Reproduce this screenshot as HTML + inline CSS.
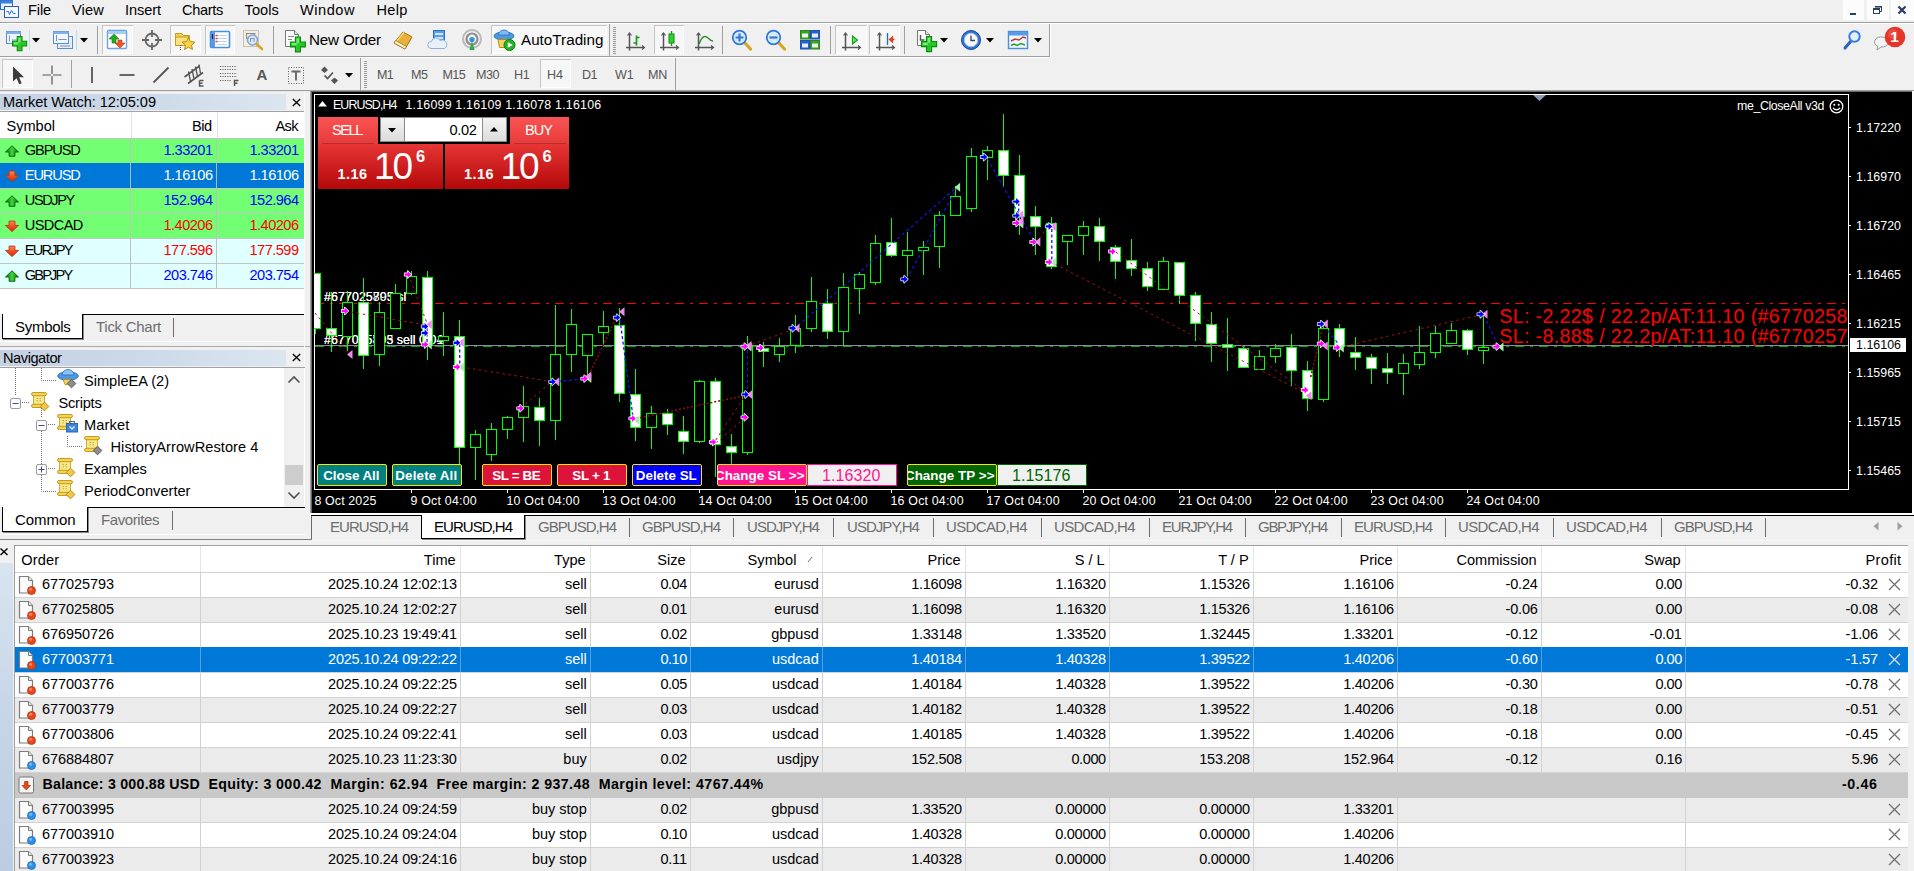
<!DOCTYPE html>
<html><head><meta charset="utf-8"><title>MT4</title>
<style>
html,body{margin:0;padding:0;}
body{width:1914px;height:871px;overflow:hidden;background:#f0f0f0;position:relative;font-family:"Liberation Sans",sans-serif;}
.t{position:absolute;white-space:pre;line-height:20px;height:20px;}
.r{position:absolute;}
svg{overflow:visible;}
</style></head><body>
<svg class="r" style="left:0px;top:0px;" width="20" height="20" viewBox="0 0 20 20">
<rect x="0.5" y="0.5" width="12" height="9" fill="#eaf2fb" stroke="#2a6fd0" stroke-width="1"/>
<rect x="0.5" y="0.5" width="12" height="3" fill="#3b82d8"/>
<rect x="4.5" y="6.5" width="14" height="11" fill="#f4f8fd" stroke="#2a5fb8" stroke-width="1"/>
<path d="M6.5 11.5 l2 0 l1 3 l2 -4 l2 3 l2 0" fill="none" stroke="#2a6fd0" stroke-width="1"/>
</svg>
<div class="t" style="left:28.00px;top:-0.50px;font-size:14.6px;color:#000;letter-spacing:-0.131px;">File</div>
<div class="t" style="left:72.00px;top:-0.50px;font-size:14.6px;color:#000;letter-spacing:0.154px;">View</div>
<div class="t" style="left:125.00px;top:-0.50px;font-size:14.6px;color:#000;letter-spacing:-0.085px;">Insert</div>
<div class="t" style="left:182.00px;top:-0.50px;font-size:14.6px;color:#000;letter-spacing:-0.333px;">Charts</div>
<div class="t" style="left:244.50px;top:-0.50px;font-size:14.6px;color:#000;letter-spacing:0.084px;">Tools</div>
<div class="t" style="left:300.00px;top:-0.50px;font-size:14.6px;color:#000;letter-spacing:0.512px;">Window</div>
<div class="t" style="left:376.50px;top:-0.50px;font-size:14.6px;color:#000;letter-spacing:0.244px;">Help</div>
<div class="r" style="left:1843px;top:0px;width:21px;height:20px;background:#fcfcfc;"></div>
<div class="r" style="left:1867px;top:0px;width:22px;height:20px;background:#fcfcfc;"></div>
<div class="r" style="left:1891px;top:0px;width:23px;height:20px;background:#fcfcfc;"></div>
<div class="r" style="left:1850px;top:13px;width:6px;height:2px;background:#2b3f63;"></div>
<svg class="r" style="left:1872px;top:4px;" width="12" height="12" viewBox="0 0 12 12"><path d="M3.5 2.5h6v5h-2" fill="none" stroke="#2b3f63" stroke-width="1"/><rect x="1.5" y="4.5" width="6" height="5" fill="#fcfcfc" stroke="#2b3f63" stroke-width="1"/><rect x="1" y="4" width="7" height="2" fill="#2b3f63"/><rect x="3" y="2" width="7" height="1.6" fill="#2b3f63"/></svg>
<svg class="r" style="left:1897px;top:5px;" width="10" height="10" viewBox="0 0 10 10"><path d="M1.5 1.5 L8.5 8.5 M8.5 1.5 L1.5 8.5" stroke="#2b3f63" stroke-width="2.2" fill="none"/></svg>
<div class="r" style="left:0px;top:22px;width:1914px;height:1px;background:#a0a0a0;"></div>
<div class="r" style="left:0px;top:23px;width:1914px;height:1px;background:#ffffff;"></div>
<div class="r" style="left:0px;top:56px;width:1049px;height:1px;background:#a0a0a0;"></div>
<div class="r" style="left:0px;top:57px;width:1050px;height:1px;background:#ffffff;"></div>
<div class="r" style="left:1049px;top:24px;width:1px;height:33px;background:#a0a0a0;"></div>
<div class="r" style="left:1050px;top:24px;width:1px;height:34px;background:#ffffff;"></div>
<svg class="r" style="left:4.0px;top:28.0px;" width="24" height="24" viewBox="0 0 24 24"><rect x="2.5" y="3.5" width="14" height="12" fill="#eef4fb" stroke="#5a8fd0"/>
<rect x="2.5" y="3.5" width="14" height="2.5" fill="#7fb0e6"/>
<path d="M5.5 7.5v6M8 12h6" stroke="#7a9cc8" fill="none"/><path transform="translate(8.5,8.5) scale(1.05)" d="M4.500 0h4.500v4.500h4.500v4.500h-4.500v4.500h-4.500v-4.500h-4.500v-4.500h4.500z" fill="#28c828" stroke="#0a8a0a" stroke-width="1"/><path transform="translate(8.5,8.5) scale(1.05)" d="M5.500 1.200h2.200v4.400h-2.200zM1.200 5.500h4.400v2h-4.400z" fill="#8ff08f" opacity=".8"/></svg>
<div class="r" style="left:29px;top:30px;width:1px;height:20px;background:#c8d8ea;"></div>
<svg class="r" style="left:32px;top:38px;" width="8" height="5" viewBox="0 0 8 5"><path d="M0 0h8l-4 4.5z" fill="#000"/></svg>
<svg class="r" style="left:51.0px;top:28.0px;" width="24" height="24" viewBox="0 0 24 24"><rect x="6.5" y="8.5" width="15" height="12" fill="#e6eef9" stroke="#5a8fd0"/>
<rect x="2.5" y="3.5" width="15" height="12" fill="#f2f7fd" stroke="#5a8fd0"/>
<rect x="2.5" y="3.5" width="15" height="2.5" fill="#7fb0e6"/>
<path d="M5.5 7v6M7.5 11.5h8M9 18h10" stroke="#6f93c4" fill="none"/></svg>
<div class="r" style="left:76px;top:30px;width:1px;height:20px;background:#c8d8ea;"></div>
<svg class="r" style="left:79.5px;top:38px;" width="8" height="5" viewBox="0 0 8 5"><path d="M0 0h8l-4 4.5z" fill="#000"/></svg>
<div class="r" style="left:97px;top:26px;width:1px;height:28px;background:#a0a0a0;"></div>
<div class="r" style="left:102px;top:25px;width:31px;height:29px;background:#f7f7f7;box-shadow:inset 1px 1px 0 #c6c6c6, inset -1px -1px 0 #ffffff;"></div>
<svg class="r" style="left:105.0px;top:28.0px;" width="24" height="24" viewBox="0 0 24 24"><rect x="2.5" y="2.5" width="19" height="18" rx="1" fill="#ffffff" stroke="#6aa5e4" stroke-width="1.4"/>
<rect x="3" y="3" width="18" height="3" fill="#a9cdf4"/>
<path d="M9 6 l5 5h-3v4h-4v-4h-3z" fill="#1fae1f" stroke="#0b7a0b" stroke-width=".6"/>
<path d="M15 20 l5 -5h-3v-3h-4v3h-3z" fill="#f0532a" stroke="#b8330f" stroke-width=".6"/></svg>
<svg class="r" style="left:139.5px;top:28.0px;" width="24" height="24" viewBox="0 0 24 24"><circle cx="12" cy="12" r="6.5" fill="none" stroke="#666" stroke-width="1.8"/>
<path d="M12 2v7M12 15v7M2 12h7M15 12h7" stroke="#666" stroke-width="1.8"/></svg>
<div class="r" style="left:170px;top:25px;width:31px;height:29px;background:#f7f7f7;box-shadow:inset 1px 1px 0 #c6c6c6, inset -1px -1px 0 #ffffff;"></div>
<svg class="r" style="left:173.0px;top:28.0px;" width="24" height="24" viewBox="0 0 24 24"><path d="M2.500 5.500h6l2 2h6v10h-14z" fill="#f3cf54" stroke="#c29a1c"/>
<path d="M2.500 9h14v8.500h-14z" fill="#fbe184" stroke="#c29a1c"/>
<path d="M7.5 17v5" stroke="#555" stroke-dasharray="1 1"/>
<path d="M15.5 9.500l1.900 4.100 4.500 .5-3.400 3 1 4.400-4-2.300-4 2.300 1-4.400-3.400-3 4.500-.5z" fill="#f8d648" stroke="#b88a12" stroke-width="1"/></svg>
<div class="r" style="left:204.5px;top:25px;width:30.5px;height:29px;background:#f7f7f7;box-shadow:inset 1px 1px 0 #c6c6c6, inset -1px -1px 0 #ffffff;"></div>
<svg class="r" style="left:207.5px;top:28.0px;" width="24" height="24" viewBox="0 0 24 24"><rect x="2.500" y="3.500" width="19" height="16" rx="1" fill="#ffffff" stroke="#4a8ee0" stroke-width="1.6"/>
<rect x="3" y="4" width="4" height="15" fill="#5b9be6"/>
<path d="M9 7.500h10M9 10.500h10M9 13.500h10M9 16.500h10" stroke="#b9d4f2"/>
<path d="M7.500 7.500h2M7.500 10.500h2M7.500 13.500h2" stroke="#e23b3b" stroke-width="1.4"/>
<path d="M4.500 6v5" stroke="#223" stroke-width="1.2"/></svg>
<svg class="r" style="left:242.0px;top:28.0px;" width="24" height="24" viewBox="0 0 24 24"><rect x="1.500" y="2.500" width="15" height="16" fill="#f3eee0" stroke="#c9c2ae"/>
<path d="M4.500 5v6M4.500 5.500h9M12.500 5v5" fill="none" stroke="#8a8a8a"/>
<circle cx="10.500" cy="12" r="5" fill="#d8e8fb" fill-opacity=".85" stroke="#7fa6d8" stroke-width="1.500"/>
<path d="M8.500 10v4M12 10v4M8.500 10.500h3.500" stroke="#7f93b0" fill="none"/>
<path d="M14.500 16l5.500 5" stroke="#d9a520" stroke-width="2.600" stroke-linecap="round"/></svg>
<div class="r" style="left:273px;top:26px;width:1px;height:28px;background:#a0a0a0;"></div>
<svg class="r" style="left:282.0px;top:28.0px;" width="24" height="24" viewBox="0 0 24 24"><path d="M3.500 2.500h9l4 4v12h-13z" fill="#fafafa" stroke="#777"/>
<path d="M12.500 2.500v4h4" fill="#e4e4e4" stroke="#777"/>
<path d="M6 8.500h6M6 11.500h4" stroke="#8a8a8a"/><path transform="translate(8.5,9) scale(1.1)" d="M4.500 0h4.500v4.500h4.500v4.500h-4.500v4.500h-4.500v-4.500h-4.500v-4.500h4.500z" fill="#28c828" stroke="#0a8a0a" stroke-width="1"/><path transform="translate(8.5,9) scale(1.1)" d="M5.500 1.200h2.200v4.400h-2.200zM1.200 5.500h4.400v2h-4.400z" fill="#8ff08f" opacity=".8"/></svg>
<div class="t" style="left:309.00px;top:29.50px;font-size:15.2px;color:#000;letter-spacing:-0.165px;">New Order</div>
<svg class="r" style="left:391.0px;top:28.0px;" width="24" height="24" viewBox="0 0 24 24"><path d="M3 15l9-11 9 5-7 12z" fill="#e9b13a" stroke="#a8730c" stroke-linejoin="round"/>
<path d="M3 15l11 6 1.500-2.500-11-6z" fill="#fbf3d6" stroke="#a8730c" stroke-width=".8"/>
<path d="M6 12.500l7-8" stroke="#f6d57a" stroke-width="1.500"/></svg>
<svg class="r" style="left:425.5px;top:28.0px;" width="24" height="24" viewBox="0 0 24 24"><rect x="7.500" y="2.500" width="11" height="13" fill="#5aa0e6" stroke="#2d6fc0"/>
<rect x="9" y="5" width="8" height="2" fill="#cfe4fb"/><rect x="9" y="9" width="8" height="2" fill="#cfe4fb"/>
<path d="M5 20.500a3.500 3.500 0 0 1 .5-7a4.500 4.500 0 0 1 8.500-1a4 4 0 0 1 4.500 8z" fill="#e7f0fb" stroke="#8fb0d8"/></svg>
<svg class="r" style="left:459.5px;top:28.0px;" width="24" height="24" viewBox="0 0 24 24"><circle cx="12" cy="11" r="9" fill="none" stroke="#b9b9b9" stroke-width="2"/>
<circle cx="12" cy="11" r="5.500" fill="none" stroke="#8e8e8e" stroke-width="2.200"/>
<circle cx="12" cy="11.500" r="2.600" fill="#2f8fe0"/>
<path d="M9.500 22l2.500-9 2.500 9z" fill="#2aa84a"/></svg>
<div class="r" style="left:490.5px;top:25px;width:116.5px;height:29px;background:#f7f7f7;box-shadow:inset 1px 1px 0 #c6c6c6, inset -1px -1px 0 #ffffff;"></div>
<svg class="r" style="left:493.0px;top:28.0px;" width="24" height="24" viewBox="0 0 24 24"><ellipse cx="11" cy="8" rx="10" ry="4" fill="#4d9ae0" stroke="#2d6fc0"/>
<path d="M5.500 7a5.500 5 0 0 1 11 0z" fill="#7ebcf2" stroke="#2d6fc0" stroke-width=".8"/>
<path d="M5 11.500h12l-1.500 8h-9z" fill="#f2d35c" stroke="#b88a12"/>
<circle cx="16.500" cy="17" r="5.500" fill="#27b327" stroke="#0f7f0f"/>
<path d="M14.800 14.200v5.600l4.800-2.800z" fill="#fff"/></svg>
<div class="t" style="left:521.00px;top:29.50px;font-size:15.2px;color:#000;letter-spacing:0.024px;">AutoTrading</div>
<div class="r" style="left:609px;top:24px;width:1px;height:32px;background:#a0a0a0;"></div>
<svg class="r" style="left:613px;top:27px;" width="3" height="27" viewBox="0 0 3 27"><rect x="0" y="0" width="3" height="1" fill="#9c9c9c"/><rect x="0" y="2" width="3" height="1" fill="#9c9c9c"/><rect x="0" y="4" width="3" height="1" fill="#9c9c9c"/><rect x="0" y="6" width="3" height="1" fill="#9c9c9c"/><rect x="0" y="8" width="3" height="1" fill="#9c9c9c"/><rect x="0" y="10" width="3" height="1" fill="#9c9c9c"/><rect x="0" y="12" width="3" height="1" fill="#9c9c9c"/><rect x="0" y="14" width="3" height="1" fill="#9c9c9c"/><rect x="0" y="16" width="3" height="1" fill="#9c9c9c"/><rect x="0" y="18" width="3" height="1" fill="#9c9c9c"/><rect x="0" y="20" width="3" height="1" fill="#9c9c9c"/><rect x="0" y="22" width="3" height="1" fill="#9c9c9c"/><rect x="0" y="24" width="3" height="1" fill="#9c9c9c"/><rect x="0" y="26" width="3" height="1" fill="#9c9c9c"/></svg>
<svg class="r" style="left:623.0px;top:28.0px;" width="24" height="24" viewBox="0 0 24 24"><path d="M6.500 5.500v17M3 19.500h18" stroke="#555" stroke-width="1.500" fill="none"/><path d="M4.500 7.500l2-2.500 2 2.500M19 17.500l2.500 2-2.500 2" fill="none" stroke="#555" stroke-width="1.200"/><path d="M13.500 7.500v10M13.500 9.500h3M10.500 15h3" stroke="#1a9a1a" stroke-width="1.700" fill="none"/></svg>
<div class="r" style="left:653.5px;top:25px;width:30.5px;height:29px;background:#f7f7f7;box-shadow:inset 1px 1px 0 #c6c6c6, inset -1px -1px 0 #ffffff;"></div>
<svg class="r" style="left:657.0px;top:28.0px;" width="24" height="24" viewBox="0 0 24 24"><path d="M6.500 5.500v17M3 19.500h18" stroke="#555" stroke-width="1.500" fill="none"/><path d="M4.500 7.500l2-2.500 2 2.500M19 17.500l2.500 2-2.500 2" fill="none" stroke="#555" stroke-width="1.200"/><path d="M14.500 3v15" stroke="#1a9a1a" stroke-width="1.400"/><rect x="12" y="6" width="5" height="9" fill="#2fd02f" stroke="#0d8d0d"/></svg>
<svg class="r" style="left:691.5px;top:28.0px;" width="24" height="24" viewBox="0 0 24 24"><path d="M6.500 5.500v17M3 19.500h18" stroke="#555" stroke-width="1.500" fill="none"/><path d="M4.500 7.500l2-2.500 2 2.500M19 17.500l2.500 2-2.500 2" fill="none" stroke="#555" stroke-width="1.200"/><path d="M7 16c3-8 6-9 9-6s4 3 5 3" fill="none" stroke="#2a8a2a" stroke-width="1.500"/></svg>
<div class="r" style="left:722px;top:26px;width:1px;height:28px;background:#a0a0a0;"></div>
<svg class="r" style="left:730.0px;top:28.0px;" width="24" height="24" viewBox="0 0 24 24"><path d="M14.500 14.500l6 6.500" stroke="#d9a520" stroke-width="3.200" stroke-linecap="round"/>
<circle cx="9.500" cy="9.500" r="6.800" fill="#d6e9ff" stroke="#2f78d6" stroke-width="1.800"/><path d="M5.500 9.500h8M9.500 5.500v8" stroke="#2f78d6" stroke-width="2.200"/></svg>
<svg class="r" style="left:764.0px;top:28.0px;" width="24" height="24" viewBox="0 0 24 24"><path d="M14.500 14.500l6 6.500" stroke="#d9a520" stroke-width="3.200" stroke-linecap="round"/>
<circle cx="9.500" cy="9.500" r="6.800" fill="#d6e9ff" stroke="#2f78d6" stroke-width="1.800"/><path d="M5.500 9.500h8" stroke="#2f78d6" stroke-width="2.200"/></svg>
<svg class="r" style="left:798.0px;top:28.0px;" width="24" height="24" viewBox="0 0 24 24"><rect x="2.500" y="2.500" width="9" height="8.500" fill="#3aa02a" stroke="#2a8420"/>
<rect x="12.500" y="2.500" width="9" height="8.500" fill="#2a5fd0" stroke="#2050b0"/>
<rect x="2.500" y="12.500" width="9" height="8.500" fill="#2a5fd0" stroke="#2050b0"/>
<rect x="12.500" y="12.500" width="9" height="8.500" fill="#3aa02a" stroke="#2a8420"/>
<rect x="4" y="5.500" width="6" height="4" fill="#e9f3e6"/><rect x="14" y="5.500" width="6" height="4" fill="#e3eefb"/>
<rect x="4" y="15.500" width="6" height="4" fill="#e3eefb"/><rect x="14" y="15.500" width="6" height="4" fill="#e9f3e6"/></svg>
<div class="r" style="left:830px;top:26px;width:1px;height:28px;background:#a0a0a0;"></div>
<div class="r" style="left:835px;top:25px;width:31.5px;height:29px;background:#f7f7f7;box-shadow:inset 1px 1px 0 #c6c6c6, inset -1px -1px 0 #ffffff;"></div>
<svg class="r" style="left:839.0px;top:28.0px;" width="24" height="24" viewBox="0 0 24 24"><path d="M6.500 5.500v17M3 19.500h18" stroke="#555" stroke-width="1.500" fill="none"/><path d="M4.500 7.500l2-2.500 2 2.500M19 17.500l2.500 2-2.500 2" fill="none" stroke="#555" stroke-width="1.200"/><path d="M13.500 8v8l5-4z" fill="#5fe05f" stroke="#18a018" stroke-width="1.200"/></svg>
<div class="r" style="left:869px;top:25px;width:31px;height:29px;background:#f7f7f7;box-shadow:inset 1px 1px 0 #c6c6c6, inset -1px -1px 0 #ffffff;"></div>
<svg class="r" style="left:873.0px;top:28.0px;" width="24" height="24" viewBox="0 0 24 24"><path d="M6.500 5.500v17M3 19.500h18" stroke="#555" stroke-width="1.500" fill="none"/><path d="M4.500 7.500l2-2.500 2 2.500M19 17.500l2.500 2-2.500 2" fill="none" stroke="#555" stroke-width="1.200"/><path d="M14.500 5v12" stroke="#2a6fb0" stroke-width="1.400"/><path d="M21.500 11.500h-5M19.500 9l-3 2.500 3 2.500z" stroke="#e0401c" stroke-width="1.300" fill="#e0401c"/></svg>
<div class="r" style="left:904px;top:26px;width:1px;height:28px;background:#a0a0a0;"></div>
<svg class="r" style="left:914.0px;top:28.0px;" width="24" height="24" viewBox="0 0 24 24"><path d="M3.500 2.500h8l4 4v11h-12z" fill="#fafafa" stroke="#777"/>
<path d="M11.500 2.500v4h4" fill="#e4e4e4" stroke="#777"/>
<path d="M6.500 7v5h4" fill="none" stroke="#555" stroke-width="1.400"/><path transform="translate(7.5,8.5) scale(1.12)" d="M4.500 0h4.500v4.500h4.500v4.500h-4.500v4.500h-4.500v-4.500h-4.500v-4.500h4.500z" fill="#28c828" stroke="#0a8a0a" stroke-width="1"/><path transform="translate(7.5,8.5) scale(1.12)" d="M5.500 1.200h2.200v4.400h-2.200zM1.200 5.500h4.400v2h-4.400z" fill="#8ff08f" opacity=".8"/></svg>
<svg class="r" style="left:939.5px;top:38px;" width="8" height="5" viewBox="0 0 8 5"><path d="M0 0h8l-4 4.5z" fill="#000"/></svg>
<svg class="r" style="left:958.5px;top:28.0px;" width="24" height="24" viewBox="0 0 24 24"><circle cx="12" cy="12" r="9.500" fill="#2f6fd0" stroke="#1b4a9a"/>
<circle cx="12" cy="12" r="6.800" fill="#f4f8fd" stroke="#9fc0ec"/>
<path d="M12 7.500v5h4" fill="none" stroke="#444" stroke-width="1.300"/></svg>
<svg class="r" style="left:986px;top:38px;" width="8" height="5" viewBox="0 0 8 5"><path d="M0 0h8l-4 4.5z" fill="#000"/></svg>
<svg class="r" style="left:1006.0px;top:28.0px;" width="24" height="24" viewBox="0 0 24 24"><rect x="2.500" y="3.500" width="19" height="17" fill="#f2f7fd" stroke="#4a8ee0" stroke-width="1.400"/>
<rect x="3" y="4" width="18" height="3.500" fill="#5b9be6"/>
<path d="M5 13l4-2 4 1 4-3 3 1" fill="none" stroke="#c0392b" stroke-width="1.400"/>
<path d="M5 17.500l3-1.500 3 1.500 4-2 4 1.500" fill="none" stroke="#27a127" stroke-width="1.400"/></svg>
<svg class="r" style="left:1033.5px;top:38px;" width="8" height="5" viewBox="0 0 8 5"><path d="M0 0h8l-4 4.5z" fill="#000"/></svg>
<svg class="r" style="left:1840.5px;top:28.0px;" width="24" height="24" viewBox="0 0 24 24"><path d="M10 13l-6 7" stroke="#2a62c0" stroke-width="3" stroke-linecap="round"/>
<circle cx="13.500" cy="8.500" r="5.200" fill="#e4f0ff" stroke="#3a7de0" stroke-width="2"/></svg>
<svg class="r" style="left:1872.0px;top:31.0px;" width="24" height="24" viewBox="0 0 24 24"><path d="M3 9a7 5 0 1 1 6 7l-4 3 .8-3.800a7 5 0 0 1-2.800-6.200z" fill="#f4f4f4" stroke="#9a9a9a"/></svg>
<svg class="r" style="left:1884px;top:26px;" width="22" height="22" viewBox="0 0 22 22"><circle cx="11" cy="11" r="10.300" fill="#e5342a"/><circle cx="9" cy="8" r="5" fill="#f0685c" opacity=".45"/></svg>
<div class="t" style="left:1890.19px;top:26.50px;font-size:15.5px;color:#fff;font-weight:bold;">1</div>
<div class="r" style="left:0px;top:90px;width:1914px;height:1px;background:#a0a0a0;"></div>
<div class="r" style="left:0px;top:91px;width:1914px;height:1px;background:#e6e6e6;"></div>
<div class="r" style="left:675px;top:58px;width:1px;height:32px;background:#a0a0a0;"></div>
<div class="r" style="left:2px;top:59px;width:31px;height:29px;background:#f7f7f7;box-shadow:inset 1px 1px 0 #c6c6c6, inset -1px -1px 0 #ffffff;"></div>
<svg class="r" style="left:5.0px;top:63.0px;" width="24" height="24" viewBox="0 0 24 24"><path d="M8 3.500v15l3.600-3.200 2.600 6 2.500-1.100-2.600-5.900h4.900z" fill="#3c3c3c"/></svg>
<svg class="r" style="left:40.0px;top:63.0px;" width="24" height="24" viewBox="0 0 24 24"><path d="M12 2.500v19M2.500 12h19" stroke="#555" stroke-width="1.200"/><rect x="11" y="11" width="2" height="2" fill="#f0f0f0"/></svg>
<div class="r" style="left:71px;top:60px;width:1px;height:28px;background:#a0a0a0;"></div>
<svg class="r" style="left:80.0px;top:63.0px;" width="24" height="24" viewBox="0 0 24 24"><path d="M12 4v16" stroke="#555" stroke-width="1.800"/></svg>
<svg class="r" style="left:114.5px;top:63.0px;" width="24" height="24" viewBox="0 0 24 24"><path d="M4.500 12h15" stroke="#555" stroke-width="1.800"/></svg>
<svg class="r" style="left:148.5px;top:63.0px;" width="24" height="24" viewBox="0 0 24 24"><path d="M4.500 19.500l15-15" stroke="#555" stroke-width="1.800"/></svg>
<svg class="r" style="left:182.0px;top:63.0px;" width="24" height="24" viewBox="0 0 24 24"><path d="M2.500 14l15-11M6 20.500l15-11" stroke="#555" stroke-width="1.600"/>
<path d="M6.500 8.500l2 10M10 6l2 10M13.500 3.500l2 10M17 1.500l1.500 9" stroke="#555" stroke-width="1.300"/>
<path d="M17.500 17.500h4M17.500 17.500v5.500h4M17.500 20.200h3" stroke="#555" stroke-width="1.400" fill="none"/></svg>
<svg class="r" style="left:216.5px;top:63.0px;" width="24" height="24" viewBox="0 0 24 24"><path d="M3 3.500h17M3 6.500h17M3 10.500h17M3 13.500h17M3 17.500h11" stroke="#666" stroke-width="1.200" stroke-dasharray="1.200 1.200"/>
<path d="M17.500 23v-5.500h4M17.500 20.200h3" stroke="#555" stroke-width="1.500" fill="none"/></svg>
<div class="t" style="left:256.58px;top:64.50px;font-size:15px;color:#555;font-weight:bold;">A</div>
<svg class="r" style="left:284.0px;top:63.0px;" width="24" height="24" viewBox="0 0 24 24"><rect x="4.500" y="4.500" width="15" height="16" fill="none" stroke="#666" stroke-dasharray="1 1.500"/>
<path d="M7.500 8.500h9M12 8.500v9" stroke="#666" stroke-width="1.900"/></svg>
<svg class="r" style="left:317.5px;top:63.0px;" width="24" height="24" viewBox="0 0 24 24"><path d="M6.500 3.500l3.500 3.500-3.500 3-3.500-3z" fill="#555"/>
<path d="M16.500 21l3.500-3.500-3.500-3-3.500 3z" fill="#555"/>
<path d="M6.500 12.500l3 3 5.500-6" fill="none" stroke="#555" stroke-width="1.700"/></svg>
<svg class="r" style="left:344.5px;top:73px;" width="8" height="5" viewBox="0 0 8 5"><path d="M0 0h8l-4 4.5z" fill="#000"/></svg>
<div class="r" style="left:360px;top:58px;width:1px;height:32px;background:#a0a0a0;"></div>
<svg class="r" style="left:364px;top:61px;" width="3" height="28" viewBox="0 0 3 28"><rect x="0" y="0" width="3" height="1" fill="#9c9c9c"/><rect x="0" y="2" width="3" height="1" fill="#9c9c9c"/><rect x="0" y="4" width="3" height="1" fill="#9c9c9c"/><rect x="0" y="6" width="3" height="1" fill="#9c9c9c"/><rect x="0" y="8" width="3" height="1" fill="#9c9c9c"/><rect x="0" y="10" width="3" height="1" fill="#9c9c9c"/><rect x="0" y="12" width="3" height="1" fill="#9c9c9c"/><rect x="0" y="14" width="3" height="1" fill="#9c9c9c"/><rect x="0" y="16" width="3" height="1" fill="#9c9c9c"/><rect x="0" y="18" width="3" height="1" fill="#9c9c9c"/><rect x="0" y="20" width="3" height="1" fill="#9c9c9c"/><rect x="0" y="22" width="3" height="1" fill="#9c9c9c"/><rect x="0" y="24" width="3" height="1" fill="#9c9c9c"/><rect x="0" y="26" width="3" height="1" fill="#9c9c9c"/></svg>
<div class="t" style="left:377.00px;top:65.00px;font-size:12.6px;color:#555;letter-spacing:-0.753px;">M1</div>
<div class="t" style="left:411.00px;top:65.00px;font-size:12.6px;color:#555;letter-spacing:-0.553px;">M5</div>
<div class="t" style="left:442.50px;top:65.00px;font-size:12.6px;color:#555;letter-spacing:-0.672px;">M15</div>
<div class="t" style="left:476.00px;top:65.00px;font-size:12.6px;color:#555;letter-spacing:-0.505px;">M30</div>
<div class="t" style="left:514.00px;top:65.00px;font-size:12.6px;color:#555;letter-spacing:-0.354px;">H1</div>
<div class="r" style="left:540px;top:59px;width:31px;height:29px;background:#f7f7f7;box-shadow:inset 1px 1px 0 #c6c6c6, inset -1px -1px 0 #ffffff;"></div>
<div class="t" style="left:547.00px;top:65.00px;font-size:12.6px;color:#555;letter-spacing:-0.054px;">H4</div>
<div class="t" style="left:582.00px;top:65.00px;font-size:12.6px;color:#555;letter-spacing:-0.554px;">D1</div>
<div class="t" style="left:615.00px;top:65.00px;font-size:12.6px;color:#555;letter-spacing:-0.200px;">W1</div>
<div class="t" style="left:648.00px;top:65.00px;font-size:12.6px;color:#555;letter-spacing:-0.298px;">MN</div>
<div class="r" style="left:0px;top:94px;width:286px;height:16px;background:linear-gradient(90deg,#c3d1e3 0%,#ccd9e8 50%,#dbe6f1 100%);"></div>
<div class="t" style="left:3.00px;top:91.50px;font-size:14.6px;color:#000;letter-spacing:-0.065px;">Market Watch: 12:05:09</div>
<svg class="r" style="left:292px;top:98px;" width="9" height="9" viewBox="0 0 9 9"><path d="M.8 1L8.200 8M8.200 1L.8 8" stroke="#000" stroke-width="1.400"/></svg>
<div class="r" style="left:0px;top:111px;width:305px;height:1px;background:#a0a0a0;"></div>
<div class="r" style="left:0px;top:112px;width:305px;height:202px;background:#ffffff;"></div>
<div class="t" style="left:6.50px;top:115.50px;font-size:14.6px;color:#000;letter-spacing:-0.030px;">Symbol</div>
<div class="t" style="left:192.00px;top:115.50px;font-size:14.6px;color:#000;letter-spacing:-0.534px;">Bid</div>
<div class="t" style="left:275.50px;top:115.50px;font-size:14.6px;color:#000;letter-spacing:-0.613px;">Ask</div>
<div class="r" style="left:0px;top:138px;width:304px;height:1px;background:#c4c4c4;"></div>
<div class="r" style="left:131px;top:113px;width:1px;height:25px;background:#e2e2e2;"></div>
<div class="r" style="left:217px;top:113px;width:1px;height:25px;background:#e2e2e2;"></div>
<svg width="0" height="0" style="position:absolute"><defs><linearGradient id="gup" x1="0" x2="1" y1="0" y2="0"><stop offset="0" stop-color="#067006"/><stop offset=".5" stop-color="#3fd43f"/><stop offset="1" stop-color="#067006"/></linearGradient><linearGradient id="gdn" x1="0" x2="0" y1="0" y2="1"><stop offset="0" stop-color="#ff8a5c"/><stop offset=".55" stop-color="#ee4a1e"/><stop offset="1" stop-color="#c8330c"/></linearGradient></defs></svg>
<div class="r" style="left:0px;top:139px;width:304px;height:24px;background:#73ff73;"></div>
<div class="r" style="left:0px;top:163px;width:304px;height:1px;background:#c4c4c4;"></div>
<div class="r" style="left:130px;top:139px;width:1px;height:24px;background:#c0c0c0;"></div>
<div class="r" style="left:216px;top:139px;width:1px;height:24px;background:#c0c0c0;"></div>
<svg class="r" style="left:5px;top:144.7px;" width="14" height="13" viewBox="0 0 14 13"><path d="M7 .8l6.500 6.200h-3.600v4.300h-5.800v-4.300h-3.600z" fill="url(#gup)" stroke="#056005" stroke-width=".9" stroke-linejoin="round"/></svg>
<div class="t" style="left:24.80px;top:139.90px;font-size:14.6px;color:#000;letter-spacing:-1.110px;">GBPUSD</div>
<div class="t" style="left:163.50px;top:139.90px;font-size:14.6px;color:#0000ff;letter-spacing:-0.538px;">1.33201</div>
<div class="t" style="left:249.50px;top:139.90px;font-size:14.6px;color:#0000ff;letter-spacing:-0.538px;">1.33201</div>
<div class="r" style="left:0px;top:163px;width:304px;height:25px;background:#0078d7;"></div>
<div class="r" style="left:0px;top:188px;width:304px;height:1px;background:#c4c4c4;"></div>
<div class="r" style="left:130px;top:163px;width:1px;height:25px;background:#9fc0e6;"></div>
<div class="r" style="left:216px;top:163px;width:1px;height:25px;background:#9fc0e6;"></div>
<svg class="r" style="left:5px;top:169.7px;" width="14" height="13" viewBox="0 0 14 13"><path d="M7 11.600l6.500-6.200h-3.600v-4.300h-5.800v4.300h-3.600z" fill="url(#gdn)" stroke="#c0330c" stroke-width=".9" stroke-linejoin="round"/></svg>
<div class="t" style="left:24.80px;top:164.90px;font-size:14.6px;color:#fff;letter-spacing:-1.109px;">EURUSD</div>
<div class="t" style="left:163.50px;top:164.90px;font-size:14.6px;color:#ffffff;letter-spacing:-0.538px;">1.16106</div>
<div class="t" style="left:249.50px;top:164.90px;font-size:14.6px;color:#ffffff;letter-spacing:-0.538px;">1.16106</div>
<div class="r" style="left:0px;top:189px;width:304px;height:24px;background:#73ff73;"></div>
<div class="r" style="left:0px;top:213px;width:304px;height:1px;background:#c4c4c4;"></div>
<div class="r" style="left:130px;top:189px;width:1px;height:24px;background:#c0c0c0;"></div>
<div class="r" style="left:216px;top:189px;width:1px;height:24px;background:#c0c0c0;"></div>
<svg class="r" style="left:5px;top:194.7px;" width="14" height="13" viewBox="0 0 14 13"><path d="M7 .8l6.500 6.200h-3.600v4.300h-5.800v-4.300h-3.600z" fill="url(#gup)" stroke="#056005" stroke-width=".9" stroke-linejoin="round"/></svg>
<div class="t" style="left:24.80px;top:189.90px;font-size:14.6px;color:#000;letter-spacing:-1.434px;">USDJPY</div>
<div class="t" style="left:163.50px;top:189.90px;font-size:14.6px;color:#0000ff;letter-spacing:-0.538px;">152.964</div>
<div class="t" style="left:249.50px;top:189.90px;font-size:14.6px;color:#0000ff;letter-spacing:-0.538px;">152.964</div>
<div class="r" style="left:0px;top:214px;width:304px;height:24px;background:#73ff73;"></div>
<div class="r" style="left:0px;top:238px;width:304px;height:1px;background:#c4c4c4;"></div>
<div class="r" style="left:130px;top:214px;width:1px;height:24px;background:#c0c0c0;"></div>
<div class="r" style="left:216px;top:214px;width:1px;height:24px;background:#c0c0c0;"></div>
<svg class="r" style="left:5px;top:219.7px;" width="14" height="13" viewBox="0 0 14 13"><path d="M7 11.600l6.500-6.200h-3.600v-4.300h-5.800v4.300h-3.600z" fill="url(#gdn)" stroke="#c0330c" stroke-width=".9" stroke-linejoin="round"/></svg>
<div class="t" style="left:24.80px;top:214.90px;font-size:14.6px;color:#000;letter-spacing:-0.609px;">USDCAD</div>
<div class="t" style="left:163.50px;top:214.90px;font-size:14.6px;color:#ff0000;letter-spacing:-0.538px;">1.40206</div>
<div class="t" style="left:249.50px;top:214.90px;font-size:14.6px;color:#ff0000;letter-spacing:-0.538px;">1.40206</div>
<div class="r" style="left:0px;top:239px;width:304px;height:24px;background:#e0ffff;"></div>
<div class="r" style="left:0px;top:263px;width:304px;height:1px;background:#c4c4c4;"></div>
<div class="r" style="left:130px;top:239px;width:1px;height:24px;background:#c0c0c0;"></div>
<div class="r" style="left:216px;top:239px;width:1px;height:24px;background:#c0c0c0;"></div>
<svg class="r" style="left:5px;top:244.7px;" width="14" height="13" viewBox="0 0 14 13"><path d="M7 11.600l6.500-6.200h-3.600v-4.300h-5.800v4.300h-3.600z" fill="url(#gdn)" stroke="#c0330c" stroke-width=".9" stroke-linejoin="round"/></svg>
<div class="t" style="left:24.80px;top:239.90px;font-size:14.6px;color:#000;letter-spacing:-1.768px;">EURJPY</div>
<div class="t" style="left:163.50px;top:239.90px;font-size:14.6px;color:#ff0000;letter-spacing:-0.538px;">177.596</div>
<div class="t" style="left:249.50px;top:239.90px;font-size:14.6px;color:#ff0000;letter-spacing:-0.538px;">177.599</div>
<div class="r" style="left:0px;top:264px;width:304px;height:24px;background:#e0ffff;"></div>
<div class="r" style="left:0px;top:288px;width:304px;height:1px;background:#c4c4c4;"></div>
<div class="r" style="left:130px;top:264px;width:1px;height:24px;background:#c0c0c0;"></div>
<div class="r" style="left:216px;top:264px;width:1px;height:24px;background:#c0c0c0;"></div>
<svg class="r" style="left:5px;top:269.7px;" width="14" height="13" viewBox="0 0 14 13"><path d="M7 .8l6.500 6.200h-3.600v4.300h-5.800v-4.300h-3.600z" fill="url(#gup)" stroke="#056005" stroke-width=".9" stroke-linejoin="round"/></svg>
<div class="t" style="left:24.80px;top:264.90px;font-size:14.6px;color:#000;letter-spacing:-1.852px;">GBPJPY</div>
<div class="t" style="left:163.50px;top:264.90px;font-size:14.6px;color:#0000ff;letter-spacing:-0.538px;">203.746</div>
<div class="t" style="left:249.50px;top:264.90px;font-size:14.6px;color:#0000ff;letter-spacing:-0.538px;">203.754</div>
<div class="r" style="left:0px;top:314px;width:305px;height:28px;background:#f0f0f0;"></div>
<div class="r" style="left:82px;top:314px;width:223px;height:1px;background:#000000;"></div>
<div class="r" style="left:2px;top:314px;width:81px;height:25px;background:#ffffff;border:1px solid #000;border-top:none;box-sizing:border-box;box-shadow:1px 1px 0 #8a8a8a;"></div>
<div class="t" style="left:15.00px;top:317.00px;font-size:15px;color:#000;letter-spacing:-0.289px;">Symbols</div>
<div class="t" style="left:96.00px;top:317.00px;font-size:15px;color:#6d6d6d;letter-spacing:-0.279px;">Tick Chart</div>
<div class="r" style="left:173px;top:318px;width:1px;height:19px;background:#6d6d6d;"></div>
<div class="r" style="left:0px;top:341px;width:305px;height:1px;background:#ffffff;"></div>
<div class="r" style="left:0px;top:346px;width:310px;height:1px;background:#a8a8a8;"></div>
<div class="r" style="left:304px;top:92px;width:1px;height:443px;background:#fafafa;"></div>
<div class="r" style="left:0px;top:350px;width:286px;height:16px;background:linear-gradient(90deg,#c3d1e3 0%,#ccd9e8 50%,#dbe6f1 100%);"></div>
<div class="t" style="left:3.00px;top:347.50px;font-size:14.6px;color:#000;letter-spacing:-0.442px;">Navigator</div>
<svg class="r" style="left:292px;top:353px;" width="9" height="9" viewBox="0 0 9 9"><path d="M.8 1L8.200 8M8.200 1L.8 8" stroke="#000" stroke-width="1.400"/></svg>
<div class="r" style="left:0px;top:367px;width:305px;height:1px;background:#a0a0a0;"></div>
<div class="r" style="left:0px;top:368px;width:305px;height:139px;background:#ffffff;"></div>
<div class="r" style="left:284px;top:368px;width:20px;height:139px;background:#f0f0f0;"></div>
<div class="r" style="left:285px;top:465px;width:18px;height:20px;background:#cdcdcd;"></div>
<svg class="r" style="left:287px;top:375px;" width="14" height="9" viewBox="0 0 14 9"><path d="M1.500 7.500l5.500-5.500 5.500 5.500" fill="none" stroke="#505050" stroke-width="1.600"/></svg>
<svg class="r" style="left:287px;top:491px;" width="14" height="9" viewBox="0 0 14 9"><path d="M1.500 1.500l5.500 5.500 5.500-5.500" fill="none" stroke="#505050" stroke-width="1.600"/></svg>
<svg class="r" style="left:0px;top:368px;" width="284" height="139" viewBox="0 0 284 139"><path d="M15.500 0v28M41.500 0v12.500h15M22 34.500h8M41.500 38v12M48 56.500h8M41.500 63v60.500h15M67.500 68v10.500h15M48 100.500h8" stroke="#707070" stroke-width="1" stroke-dasharray="1 1" fill="none"/></svg>
<svg class="r" style="left:10px;top:398px;" width="11" height="11" viewBox="0 0 11 11"><rect x=".500" y=".500" width="10" height="10" rx="1.500" fill="#fdfdfd" stroke="#9a9a9a"/><path d="M2.500 5.500h6" stroke="#3a4f8a" stroke-width="1"/></svg>
<svg class="r" style="left:36px;top:420px;" width="11" height="11" viewBox="0 0 11 11"><rect x=".500" y=".500" width="10" height="10" rx="1.500" fill="#fdfdfd" stroke="#9a9a9a"/><path d="M2.500 5.500h6" stroke="#3a4f8a" stroke-width="1"/></svg>
<svg class="r" style="left:36px;top:464px;" width="11" height="11" viewBox="0 0 11 11"><rect x=".500" y=".500" width="10" height="10" rx="1.500" fill="#fdfdfd" stroke="#9a9a9a"/><path d="M2.500 5.500h6M5.500 2.500v6" stroke="#3a4f8a" stroke-width="1"/></svg>
<svg class="r" style="left:57.5px;top:369px;" width="22" height="22" viewBox="0 0 22 22"><ellipse cx="10" cy="7" rx="10.300" ry="4.200" fill="#4d9ae0" stroke="#2d6fc0"/>
<path d="M4 6a6 5.500 0 0 1 12 0z" fill="#86c4f6" stroke="#2d6fc0" stroke-width=".8"/>
<path d="M5 10.500h10l-2 5h-6z" fill="#f2d35c" stroke="#b88a12" stroke-width=".8"/><path d="M13.500 10.200l4.300 4.300-4.300 4.300-4.300-4.300z" fill="#8c8c8c" stroke="#5a5a5a" stroke-width="1"/></svg>
<div class="t" style="left:84.00px;top:370.50px;font-size:14.6px;color:#000;letter-spacing:-0.016px;">SimpleEA (2)</div>
<svg class="r" style="left:31px;top:391.7px;" width="22" height="22" viewBox="0 0 22 22"><rect x="2.500" y="2" width="11" height="12" fill="#f8e88c" stroke="#d1aa34" stroke-width="1"/>
<rect x=".500" y=".500" width="15" height="3.200" rx="1.600" fill="#f2d45c" stroke="#c49b1c" stroke-width="1"/>
<rect x=".500" y="12.300" width="12.500" height="3.200" rx="1.600" fill="#f2d45c" stroke="#c49b1c" stroke-width="1"/>
<path d="M5.500 6.500h1.500M8.500 6.500h1.500M5.500 8.800h1.500M8.500 8.800h1.500" stroke="#c9a838" stroke-width="1"/><path d="M13.500 10.200l4.300 4.300-4.300 4.300-4.300-4.300z" fill="#f2c84a" stroke="#b88a12" stroke-width="1"/></svg>
<div class="t" style="left:58.50px;top:392.80px;font-size:14.6px;color:#000;letter-spacing:-0.231px;">Scripts</div>
<svg class="r" style="left:57px;top:414.2px;" width="22" height="22" viewBox="0 0 22 22"><rect x="2.500" y="2" width="11" height="12" fill="#f8e88c" stroke="#d1aa34" stroke-width="1"/>
<rect x=".500" y=".500" width="15" height="3.200" rx="1.600" fill="#f2d45c" stroke="#c49b1c" stroke-width="1"/>
<rect x=".500" y="12.300" width="12.500" height="3.200" rx="1.600" fill="#f2d45c" stroke="#c49b1c" stroke-width="1"/>
<path d="M5.500 6.500h1.500M8.500 6.500h1.500M5.500 8.800h1.500M8.500 8.800h1.500" stroke="#c9a838" stroke-width="1"/><rect x="9.500" y="9.500" width="11" height="8.500" fill="#3f86dc" stroke="#2b64b4"/><rect x="12.500" y="7.500" width="5" height="2.500" fill="none" stroke="#4a6a9a"/><path d="M12.500 12.500l2.500 2.500 2.500-2.500" fill="none" stroke="#dff" stroke-width="1.200"/></svg>
<div class="t" style="left:84.00px;top:414.70px;font-size:14.6px;color:#000;letter-spacing:0.148px;">Market</div>
<svg class="r" style="left:83.5px;top:436px;" width="22" height="22" viewBox="0 0 22 22"><rect x="2.500" y="2" width="11" height="12" fill="#f8e88c" stroke="#d1aa34" stroke-width="1"/>
<rect x=".500" y=".500" width="15" height="3.200" rx="1.600" fill="#f2d45c" stroke="#c49b1c" stroke-width="1"/>
<rect x=".500" y="12.300" width="12.500" height="3.200" rx="1.600" fill="#f2d45c" stroke="#c49b1c" stroke-width="1"/>
<path d="M5.500 6.500h1.500M8.500 6.500h1.500M5.500 8.800h1.500M8.500 8.800h1.500" stroke="#c9a838" stroke-width="1"/><path d="M13.500 10.200l4.300 4.300-4.300 4.300-4.300-4.300z" fill="#8c8c8c" stroke="#5a5a5a" stroke-width="1"/></svg>
<div class="t" style="left:110.50px;top:436.50px;font-size:14.6px;color:#000;letter-spacing:0.055px;">HistoryArrowRestore 4</div>
<svg class="r" style="left:57px;top:457.8px;" width="22" height="22" viewBox="0 0 22 22"><rect x="2.500" y="2" width="11" height="12" fill="#f8e88c" stroke="#d1aa34" stroke-width="1"/>
<rect x=".500" y=".500" width="15" height="3.200" rx="1.600" fill="#f2d45c" stroke="#c49b1c" stroke-width="1"/>
<rect x=".500" y="12.300" width="12.500" height="3.200" rx="1.600" fill="#f2d45c" stroke="#c49b1c" stroke-width="1"/>
<path d="M5.500 6.500h1.500M8.500 6.500h1.500M5.500 8.800h1.500M8.500 8.800h1.500" stroke="#c9a838" stroke-width="1"/><path d="M13.500 10.200l4.300 4.300-4.300 4.300-4.300-4.300z" fill="#f2c84a" stroke="#b88a12" stroke-width="1"/></svg>
<div class="t" style="left:84.00px;top:458.70px;font-size:14.6px;color:#000;letter-spacing:-0.200px;">Examples</div>
<svg class="r" style="left:57px;top:480px;" width="22" height="22" viewBox="0 0 22 22"><rect x="2.500" y="2" width="11" height="12" fill="#f8e88c" stroke="#d1aa34" stroke-width="1"/>
<rect x=".500" y=".500" width="15" height="3.200" rx="1.600" fill="#f2d45c" stroke="#c49b1c" stroke-width="1"/>
<rect x=".500" y="12.300" width="12.500" height="3.200" rx="1.600" fill="#f2d45c" stroke="#c49b1c" stroke-width="1"/>
<path d="M5.500 6.500h1.500M8.500 6.500h1.500M5.500 8.800h1.500M8.500 8.800h1.500" stroke="#c9a838" stroke-width="1"/><path d="M13.500 10.200l4.300 4.300-4.300 4.300-4.300-4.300z" fill="#f2c84a" stroke="#b88a12" stroke-width="1"/></svg>
<div class="t" style="left:84.00px;top:480.60px;font-size:14.6px;color:#000;letter-spacing:0.014px;">PeriodConverter</div>
<div class="r" style="left:0px;top:507px;width:305px;height:28px;background:#f0f0f0;"></div>
<div class="r" style="left:87px;top:507px;width:218px;height:1px;background:#000000;"></div>
<div class="r" style="left:2px;top:507px;width:86px;height:25px;background:#ffffff;border:1px solid #000;border-top:none;box-sizing:border-box;box-shadow:1px 1px 0 #8a8a8a;"></div>
<div class="t" style="left:15.00px;top:510.30px;font-size:15px;color:#000;letter-spacing:-0.059px;">Common</div>
<div class="t" style="left:101.00px;top:510.30px;font-size:15px;color:#6d6d6d;letter-spacing:-0.410px;">Favorites</div>
<div class="r" style="left:172px;top:511px;width:1px;height:19px;background:#6d6d6d;"></div>
<div class="r" style="left:0px;top:534px;width:305px;height:1px;background:#ffffff;"></div>
<div class="r" style="left:310px;top:91px;width:1px;height:423px;background:#a0a0a0;"></div>
<div class="r" style="left:311px;top:91px;width:1px;height:423px;background:#696969;"></div>
<div class="r" style="left:312px;top:91px;width:1602px;height:1px;background:#696969;"></div>
<div class="r" style="left:312px;top:92px;width:1600px;height:421px;background:#000000;"></div>
<div class="r" style="left:1912px;top:91px;width:2px;height:424px;background:#ffffff;"></div>
<div class="r" style="left:310px;top:513px;width:1604px;height:2px;background:#ffffff;"></div>
<div class="r" style="left:314px;top:94px;width:1535px;height:1px;background:#ffffff;"></div>
<div class="r" style="left:314px;top:94px;width:1px;height:396px;background:#ffffff;"></div>
<div class="r" style="left:1848px;top:94px;width:1px;height:396px;background:#ffffff;"></div>
<div class="r" style="left:314px;top:489px;width:1535px;height:1px;background:#ffffff;"></div>
<div class="t" style="left:324.00px;top:286.50px;font-size:12.4px;color:#fff;letter-spacing:0.087px;">#677025805 sl</div>
<div class="t" style="left:324.00px;top:286.50px;font-size:12.4px;color:#fff;letter-spacing:0.087px;">#677025793 sl</div>
<div class="t" style="left:324.00px;top:329.50px;font-size:12.4px;color:#fff;letter-spacing:0.045px;">#677025793 sell 0.04</div>
<div class="t" style="left:324.00px;top:329.50px;font-size:12.4px;color:#fff;letter-spacing:0.045px;">#677025805 sell 0.01</div>
<svg class="r" style="left:314px;top:94px;overflow:hidden" width="1535" height="396" viewBox="0 0 1535 396" shape-rendering="crispEdges"><path d="M1 209.500H1534" stroke="#ff0000" stroke-width="1" stroke-dasharray="9 6 3 6" fill="none"/><path d="M1 252.500H1534" stroke="#00a800" stroke-width="1" stroke-dasharray="9 6 3 6" fill="none"/><path d="M1 251.500H1534" stroke="#868e9e" stroke-width="1" fill="none"/><rect x="1" y="235" width="1" height="5" fill="#00ff00"/><rect x="-4" y="179" width="11" height="56" fill="#00ff00"/><rect x="-3" y="180" width="9" height="54" fill="#fff"/><rect x="17" y="198" width="1" height="36" fill="#00ff00"/><rect x="17" y="242" width="1" height="16" fill="#00ff00"/><rect x="12" y="234" width="11" height="8" fill="#00ff00"/><rect x="13" y="235" width="9" height="6" fill="#fff"/><rect x="33" y="197" width="1" height="11" fill="#00ff00"/><rect x="33" y="243" width="1" height="14" fill="#00ff00"/><rect x="28" y="208" width="11" height="35" fill="#00ff00"/><rect x="29" y="209" width="9" height="33" fill="#000"/><rect x="49" y="184" width="1" height="24" fill="#00ff00"/><rect x="49" y="262" width="1" height="13" fill="#00ff00"/><rect x="44" y="208" width="11" height="54" fill="#00ff00"/><rect x="45" y="209" width="9" height="52" fill="#fff"/><rect x="65" y="208" width="1" height="10" fill="#00ff00"/><rect x="65" y="261" width="1" height="11" fill="#00ff00"/><rect x="60" y="218" width="11" height="43" fill="#00ff00"/><rect x="61" y="219" width="9" height="41" fill="#000"/><rect x="81" y="190" width="1" height="9" fill="#00ff00"/><rect x="76" y="199" width="11" height="36" fill="#00ff00"/><rect x="77" y="200" width="9" height="34" fill="#000"/><rect x="97" y="177" width="1" height="5" fill="#00ff00"/><rect x="97" y="200" width="1" height="1" fill="#00ff00"/><rect x="92" y="182" width="11" height="18" fill="#00ff00"/><rect x="93" y="183" width="9" height="16" fill="#000"/><rect x="113" y="177" width="1" height="6" fill="#00ff00"/><rect x="113" y="252" width="1" height="14" fill="#00ff00"/><rect x="108" y="183" width="11" height="69" fill="#00ff00"/><rect x="109" y="184" width="9" height="67" fill="#fff"/><rect x="129" y="218" width="1" height="24" fill="#00ff00"/><rect x="129" y="247" width="1" height="15" fill="#00ff00"/><rect x="124" y="242" width="11" height="5" fill="#00ff00"/><rect x="125" y="243" width="9" height="3" fill="#000"/><rect x="145" y="226" width="1" height="16" fill="#00ff00"/><rect x="145" y="354" width="1" height="22" fill="#00ff00"/><rect x="140" y="242" width="11" height="112" fill="#00ff00"/><rect x="141" y="243" width="9" height="110" fill="#fff"/><rect x="161" y="336" width="1" height="4" fill="#00ff00"/><rect x="161" y="354" width="1" height="32" fill="#00ff00"/><rect x="156" y="340" width="11" height="14" fill="#00ff00"/><rect x="157" y="341" width="9" height="12" fill="#000"/><rect x="177" y="329" width="1" height="6" fill="#00ff00"/><rect x="177" y="361" width="1" height="6" fill="#00ff00"/><rect x="172" y="335" width="11" height="26" fill="#00ff00"/><rect x="173" y="336" width="9" height="24" fill="#000"/><rect x="193" y="322" width="1" height="1" fill="#00ff00"/><rect x="193" y="336" width="1" height="9" fill="#00ff00"/><rect x="188" y="323" width="11" height="13" fill="#00ff00"/><rect x="189" y="324" width="9" height="11" fill="#000"/><rect x="209" y="292" width="1" height="20" fill="#00ff00"/><rect x="209" y="324" width="1" height="24" fill="#00ff00"/><rect x="204" y="312" width="11" height="12" fill="#00ff00"/><rect x="205" y="313" width="9" height="10" fill="#000"/><rect x="225" y="304" width="1" height="9" fill="#00ff00"/><rect x="225" y="327" width="1" height="25" fill="#00ff00"/><rect x="220" y="313" width="11" height="14" fill="#00ff00"/><rect x="221" y="314" width="9" height="12" fill="#fff"/><rect x="241" y="211" width="1" height="49" fill="#00ff00"/><rect x="241" y="327" width="1" height="19" fill="#00ff00"/><rect x="236" y="260" width="11" height="67" fill="#00ff00"/><rect x="237" y="261" width="9" height="65" fill="#000"/><rect x="257" y="215" width="1" height="15" fill="#00ff00"/><rect x="257" y="261" width="1" height="17" fill="#00ff00"/><rect x="252" y="230" width="11" height="31" fill="#00ff00"/><rect x="253" y="231" width="9" height="29" fill="#000"/><rect x="273" y="262" width="1" height="20" fill="#00ff00"/><rect x="268" y="240" width="11" height="22" fill="#00ff00"/><rect x="269" y="241" width="9" height="20" fill="#000"/><rect x="289" y="217" width="1" height="15" fill="#00ff00"/><rect x="289" y="239" width="1" height="14" fill="#00ff00"/><rect x="284" y="232" width="11" height="7" fill="#00ff00"/><rect x="285" y="233" width="9" height="5" fill="#000"/><rect x="305" y="214" width="1" height="17" fill="#00ff00"/><rect x="305" y="300" width="1" height="8" fill="#00ff00"/><rect x="300" y="231" width="11" height="69" fill="#00ff00"/><rect x="301" y="232" width="9" height="67" fill="#fff"/><rect x="321" y="275" width="1" height="25" fill="#00ff00"/><rect x="321" y="334" width="1" height="13" fill="#00ff00"/><rect x="316" y="300" width="11" height="34" fill="#00ff00"/><rect x="317" y="301" width="9" height="32" fill="#fff"/><rect x="337" y="312" width="1" height="7" fill="#00ff00"/><rect x="337" y="334" width="1" height="21" fill="#00ff00"/><rect x="332" y="319" width="11" height="15" fill="#00ff00"/><rect x="333" y="320" width="9" height="13" fill="#000"/><rect x="353" y="315" width="1" height="4" fill="#00ff00"/><rect x="353" y="331" width="1" height="10" fill="#00ff00"/><rect x="348" y="319" width="11" height="12" fill="#00ff00"/><rect x="349" y="320" width="9" height="10" fill="#fff"/><rect x="369" y="322" width="1" height="15" fill="#00ff00"/><rect x="369" y="348" width="1" height="12" fill="#00ff00"/><rect x="364" y="337" width="11" height="11" fill="#00ff00"/><rect x="365" y="338" width="9" height="9" fill="#fff"/><rect x="385" y="286" width="1" height="1" fill="#00ff00"/><rect x="385" y="348" width="1" height="1" fill="#00ff00"/><rect x="380" y="287" width="11" height="61" fill="#00ff00"/><rect x="381" y="288" width="9" height="59" fill="#000"/><rect x="401" y="284" width="1" height="3" fill="#00ff00"/><rect x="401" y="351" width="1" height="32" fill="#00ff00"/><rect x="396" y="287" width="11" height="64" fill="#00ff00"/><rect x="397" y="288" width="9" height="62" fill="#fff"/><rect x="417" y="340" width="1" height="12" fill="#00ff00"/><rect x="417" y="359" width="1" height="17" fill="#00ff00"/><rect x="412" y="352" width="11" height="7" fill="#00ff00"/><rect x="413" y="353" width="9" height="5" fill="#fff"/><rect x="433" y="242" width="1" height="9" fill="#00ff00"/><rect x="433" y="359" width="1" height="2" fill="#00ff00"/><rect x="428" y="251" width="11" height="108" fill="#00ff00"/><rect x="429" y="252" width="9" height="106" fill="#000"/><rect x="449" y="248" width="1" height="6" fill="#00ff00"/><rect x="449" y="258" width="1" height="15" fill="#00ff00"/><rect x="444" y="254" width="11" height="4" fill="#00ff00"/><rect x="445" y="255" width="9" height="2" fill="#fff"/><rect x="465" y="244" width="1" height="8" fill="#00ff00"/><rect x="465" y="261" width="1" height="7" fill="#00ff00"/><rect x="460" y="252" width="11" height="9" fill="#00ff00"/><rect x="461" y="253" width="9" height="7" fill="#000"/><rect x="481" y="221" width="1" height="13" fill="#00ff00"/><rect x="481" y="252" width="1" height="7" fill="#00ff00"/><rect x="476" y="234" width="11" height="18" fill="#00ff00"/><rect x="477" y="235" width="9" height="16" fill="#000"/><rect x="497" y="183" width="1" height="24" fill="#00ff00"/><rect x="497" y="235" width="1" height="3" fill="#00ff00"/><rect x="492" y="207" width="11" height="28" fill="#00ff00"/><rect x="493" y="208" width="9" height="26" fill="#000"/><rect x="513" y="195" width="1" height="14" fill="#00ff00"/><rect x="513" y="238" width="1" height="7" fill="#00ff00"/><rect x="508" y="209" width="11" height="29" fill="#00ff00"/><rect x="509" y="210" width="9" height="27" fill="#fff"/><rect x="529" y="179" width="1" height="14" fill="#00ff00"/><rect x="529" y="238" width="1" height="14" fill="#00ff00"/><rect x="524" y="193" width="11" height="45" fill="#00ff00"/><rect x="525" y="194" width="9" height="43" fill="#000"/><rect x="545" y="178" width="1" height="2" fill="#00ff00"/><rect x="545" y="195" width="1" height="25" fill="#00ff00"/><rect x="540" y="180" width="11" height="15" fill="#00ff00"/><rect x="541" y="181" width="9" height="13" fill="#000"/><rect x="561" y="141" width="1" height="8" fill="#00ff00"/><rect x="561" y="189" width="1" height="2" fill="#00ff00"/><rect x="556" y="149" width="11" height="40" fill="#00ff00"/><rect x="557" y="150" width="9" height="38" fill="#000"/><rect x="577" y="124" width="1" height="24" fill="#00ff00"/><rect x="577" y="162" width="1" height="1" fill="#00ff00"/><rect x="572" y="148" width="11" height="14" fill="#00ff00"/><rect x="573" y="149" width="9" height="12" fill="#fff"/><rect x="593" y="138" width="1" height="18" fill="#00ff00"/><rect x="593" y="162" width="1" height="22" fill="#00ff00"/><rect x="588" y="156" width="11" height="6" fill="#00ff00"/><rect x="589" y="157" width="9" height="4" fill="#000"/><rect x="609" y="147" width="1" height="6" fill="#00ff00"/><rect x="609" y="157" width="1" height="24" fill="#00ff00"/><rect x="604" y="153" width="11" height="4" fill="#00ff00"/><rect x="605" y="154" width="9" height="2" fill="#000"/><rect x="625" y="117" width="1" height="4" fill="#00ff00"/><rect x="625" y="153" width="1" height="21" fill="#00ff00"/><rect x="620" y="121" width="11" height="32" fill="#00ff00"/><rect x="621" y="122" width="9" height="30" fill="#000"/><rect x="641" y="92" width="1" height="10" fill="#00ff00"/><rect x="636" y="102" width="11" height="20" fill="#00ff00"/><rect x="637" y="103" width="9" height="18" fill="#000"/><rect x="657" y="54" width="1" height="8" fill="#00ff00"/><rect x="657" y="115" width="1" height="3" fill="#00ff00"/><rect x="652" y="62" width="11" height="53" fill="#00ff00"/><rect x="653" y="63" width="9" height="51" fill="#000"/><rect x="673" y="52" width="1" height="4" fill="#00ff00"/><rect x="673" y="64" width="1" height="22" fill="#00ff00"/><rect x="668" y="56" width="11" height="8" fill="#00ff00"/><rect x="669" y="57" width="9" height="6" fill="#000"/><rect x="689" y="20" width="1" height="36" fill="#00ff00"/><rect x="689" y="82" width="1" height="11" fill="#00ff00"/><rect x="684" y="56" width="11" height="26" fill="#00ff00"/><rect x="685" y="57" width="9" height="24" fill="#fff"/><rect x="705" y="61" width="1" height="20" fill="#00ff00"/><rect x="705" y="123" width="1" height="18" fill="#00ff00"/><rect x="700" y="81" width="11" height="42" fill="#00ff00"/><rect x="701" y="82" width="9" height="40" fill="#fff"/><rect x="721" y="112" width="1" height="10" fill="#00ff00"/><rect x="721" y="133" width="1" height="28" fill="#00ff00"/><rect x="716" y="122" width="11" height="11" fill="#00ff00"/><rect x="717" y="123" width="9" height="9" fill="#fff"/><rect x="737" y="123" width="1" height="6" fill="#00ff00"/><rect x="737" y="173" width="1" height="2" fill="#00ff00"/><rect x="732" y="129" width="11" height="44" fill="#00ff00"/><rect x="733" y="130" width="9" height="42" fill="#fff"/><rect x="753" y="148" width="1" height="23" fill="#00ff00"/><rect x="748" y="141" width="11" height="7" fill="#00ff00"/><rect x="749" y="142" width="9" height="5" fill="#000"/><rect x="769" y="127" width="1" height="5" fill="#00ff00"/><rect x="769" y="142" width="1" height="19" fill="#00ff00"/><rect x="764" y="132" width="11" height="10" fill="#00ff00"/><rect x="765" y="133" width="9" height="8" fill="#000"/><rect x="785" y="124" width="1" height="8" fill="#00ff00"/><rect x="785" y="148" width="1" height="19" fill="#00ff00"/><rect x="780" y="132" width="11" height="16" fill="#00ff00"/><rect x="781" y="133" width="9" height="14" fill="#fff"/><rect x="801" y="151" width="1" height="2" fill="#00ff00"/><rect x="801" y="168" width="1" height="17" fill="#00ff00"/><rect x="796" y="153" width="11" height="15" fill="#00ff00"/><rect x="797" y="154" width="9" height="13" fill="#fff"/><rect x="817" y="145" width="1" height="21" fill="#00ff00"/><rect x="817" y="175" width="1" height="7" fill="#00ff00"/><rect x="812" y="166" width="11" height="9" fill="#00ff00"/><rect x="813" y="167" width="9" height="7" fill="#fff"/><rect x="833" y="168" width="1" height="6" fill="#00ff00"/><rect x="833" y="193" width="1" height="4" fill="#00ff00"/><rect x="828" y="174" width="11" height="19" fill="#00ff00"/><rect x="829" y="175" width="9" height="17" fill="#fff"/><rect x="849" y="163" width="1" height="4" fill="#00ff00"/><rect x="844" y="167" width="11" height="29" fill="#00ff00"/><rect x="845" y="168" width="9" height="27" fill="#000"/><rect x="865" y="202" width="1" height="8" fill="#00ff00"/><rect x="860" y="168" width="11" height="34" fill="#00ff00"/><rect x="861" y="169" width="9" height="32" fill="#fff"/><rect x="881" y="198" width="1" height="3" fill="#00ff00"/><rect x="881" y="230" width="1" height="17" fill="#00ff00"/><rect x="876" y="201" width="11" height="29" fill="#00ff00"/><rect x="877" y="202" width="9" height="27" fill="#fff"/><rect x="897" y="218" width="1" height="12" fill="#00ff00"/><rect x="897" y="250" width="1" height="18" fill="#00ff00"/><rect x="892" y="230" width="11" height="20" fill="#00ff00"/><rect x="893" y="231" width="9" height="18" fill="#fff"/><rect x="913" y="224" width="1" height="26" fill="#00ff00"/><rect x="913" y="254" width="1" height="23" fill="#00ff00"/><rect x="908" y="250" width="11" height="4" fill="#00ff00"/><rect x="909" y="251" width="9" height="2" fill="#fff"/><rect x="929" y="252" width="1" height="2" fill="#00ff00"/><rect x="924" y="254" width="11" height="20" fill="#00ff00"/><rect x="925" y="255" width="9" height="18" fill="#fff"/><rect x="945" y="256" width="1" height="6" fill="#00ff00"/><rect x="940" y="262" width="11" height="14" fill="#00ff00"/><rect x="941" y="263" width="9" height="12" fill="#000"/><rect x="961" y="250" width="1" height="4" fill="#00ff00"/><rect x="961" y="263" width="1" height="6" fill="#00ff00"/><rect x="956" y="254" width="11" height="9" fill="#00ff00"/><rect x="957" y="255" width="9" height="7" fill="#000"/><rect x="977" y="240" width="1" height="13" fill="#00ff00"/><rect x="977" y="277" width="1" height="15" fill="#00ff00"/><rect x="972" y="253" width="11" height="24" fill="#00ff00"/><rect x="973" y="254" width="9" height="22" fill="#fff"/><rect x="993" y="267" width="1" height="9" fill="#00ff00"/><rect x="993" y="305" width="1" height="12" fill="#00ff00"/><rect x="988" y="276" width="11" height="29" fill="#00ff00"/><rect x="989" y="277" width="9" height="27" fill="#fff"/><rect x="1009" y="228" width="1" height="6" fill="#00ff00"/><rect x="1009" y="306" width="1" height="2" fill="#00ff00"/><rect x="1004" y="234" width="11" height="72" fill="#00ff00"/><rect x="1005" y="235" width="9" height="70" fill="#000"/><rect x="1025" y="230" width="1" height="4" fill="#00ff00"/><rect x="1025" y="253" width="1" height="10" fill="#00ff00"/><rect x="1020" y="234" width="11" height="19" fill="#00ff00"/><rect x="1021" y="235" width="9" height="17" fill="#fff"/><rect x="1041" y="243" width="1" height="15" fill="#00ff00"/><rect x="1041" y="264" width="1" height="12" fill="#00ff00"/><rect x="1036" y="258" width="11" height="6" fill="#00ff00"/><rect x="1037" y="259" width="9" height="4" fill="#fff"/><rect x="1057" y="260" width="1" height="3" fill="#00ff00"/><rect x="1057" y="275" width="1" height="15" fill="#00ff00"/><rect x="1052" y="263" width="11" height="12" fill="#00ff00"/><rect x="1053" y="264" width="9" height="10" fill="#fff"/><rect x="1073" y="259" width="1" height="15" fill="#00ff00"/><rect x="1073" y="279" width="1" height="11" fill="#00ff00"/><rect x="1068" y="274" width="11" height="5" fill="#00ff00"/><rect x="1069" y="275" width="9" height="3" fill="#fff"/><rect x="1089" y="260" width="1" height="9" fill="#00ff00"/><rect x="1089" y="280" width="1" height="21" fill="#00ff00"/><rect x="1084" y="269" width="11" height="11" fill="#00ff00"/><rect x="1085" y="270" width="9" height="9" fill="#000"/><rect x="1105" y="232" width="1" height="26" fill="#00ff00"/><rect x="1105" y="271" width="1" height="4" fill="#00ff00"/><rect x="1100" y="258" width="11" height="13" fill="#00ff00"/><rect x="1101" y="259" width="9" height="11" fill="#000"/><rect x="1121" y="232" width="1" height="7" fill="#00ff00"/><rect x="1121" y="259" width="1" height="5" fill="#00ff00"/><rect x="1116" y="239" width="11" height="20" fill="#00ff00"/><rect x="1117" y="240" width="9" height="18" fill="#000"/><rect x="1137" y="229" width="1" height="7" fill="#00ff00"/><rect x="1132" y="236" width="11" height="14" fill="#00ff00"/><rect x="1133" y="237" width="9" height="12" fill="#000"/><rect x="1153" y="235" width="1" height="1" fill="#00ff00"/><rect x="1153" y="256" width="1" height="5" fill="#00ff00"/><rect x="1148" y="236" width="11" height="20" fill="#00ff00"/><rect x="1149" y="237" width="9" height="18" fill="#fff"/><rect x="1169" y="222" width="1" height="31" fill="#00ff00"/><rect x="1169" y="257" width="1" height="13" fill="#00ff00"/><rect x="1164" y="253" width="11" height="4" fill="#00ff00"/><rect x="1165" y="254" width="9" height="2" fill="#000"/></svg>
<svg class="r" style="left:314px;top:94px;overflow:hidden" width="1535" height="396" viewBox="0 0 1535 396"><path d="M1.0 219.0 L35.0 260.0" stroke="#b01010" stroke-width="1" stroke-dasharray="2.500 3.500" fill="none"/><path d="M31.0 217.0 L112.0 231.0" stroke="#b01010" stroke-width="1" stroke-dasharray="2.500 3.500" fill="none"/><path d="M94.4 180.4 L113.3 230.0" stroke="#b01010" stroke-width="1" stroke-dasharray="2.500 3.500" fill="none"/><path d="M147.0 273.0 L237.5 287.5" stroke="#b01010" stroke-width="1" stroke-dasharray="2.500 3.500" fill="none"/><path d="M206.4 314.3 L237.5 287.8" stroke="#b01010" stroke-width="1" stroke-dasharray="2.500 3.500" fill="none"/><path d="M275.0 281.0 L302.0 224.4" stroke="#8a0c0c" stroke-width="1.600" stroke-dasharray="2 2" fill="none"/><path d="M322.0 324.6 L430.0 301.7" stroke="#8a0c0c" stroke-width="1.600" stroke-dasharray="2 2" fill="none"/><path d="M401.8 346.0 L430.0 303.0" stroke="#b01010" stroke-width="1" stroke-dasharray="2.500 3.500" fill="none"/><path d="M402.0 349.0 L432.0 323.0" stroke="#b01010" stroke-width="1" stroke-dasharray="2.500 3.500" fill="none"/><path d="M438.0 250.4 L478.7 235.6" stroke="#b01010" stroke-width="1" stroke-dasharray="2.500 3.500" fill="none"/><path d="M725.0 144.6 L732.0 135.0" stroke="#b01010" stroke-width="1" stroke-dasharray="2.500 3.500" fill="none"/><path d="M741.0 170.2 L856.0 229.6 L989.0 298.0" stroke="#b01010" stroke-width="1" stroke-dasharray="2.500 3.500" fill="none"/><path d="M801.8 158.0 L856.0 198.5 L994.0 300.0" stroke="#b01010" stroke-width="1" stroke-dasharray="2.500 3.500" fill="none"/><path d="M996.7 283.0 L1008.2 234.7" stroke="#8a0c0c" stroke-width="1.600" stroke-dasharray="2 2" fill="none"/><path d="M1031.2 252.0 L1164.4 221.4" stroke="#b01010" stroke-width="1" stroke-dasharray="2.500 3.500" fill="none"/><path d="M145.7 250.0 L145.7 272.0" stroke="#1414ff" stroke-width="1.300" stroke-dasharray="3 2.500" fill="none"/><path d="M244.0 287.3 L269.8 285.0" stroke="#1414ff" stroke-width="1.300" stroke-dasharray="3 2.500" fill="none"/><path d="M306.0 225.8 L319.0 323.0" stroke="#1414ff" stroke-width="1.300" stroke-dasharray="3 2.500" fill="none"/><path d="M433.4 256.0 L433.4 299.0" stroke="#1414ff" stroke-width="1.100" stroke-dasharray="3 3" fill="none"/><path d="M484.0 231.6 L536.0 186.4 L642.6 93.3" stroke="#1414ff" stroke-width="1.100" stroke-dasharray="3 3" fill="none"/><path d="M592.7 185.0 L642.6 94.6" stroke="#1414ff" stroke-width="1.100" stroke-dasharray="3 3" fill="none"/><path d="M673.6 65.0 L719.5 146.0" stroke="#1414ff" stroke-width="1.100" stroke-dasharray="3 3" fill="none"/><path d="M704.7 109.0 L704.7 121.0" stroke="#1414ff" stroke-width="1.300" stroke-dasharray="3 2.500" fill="none"/><path d="M737.8 135.0 L737.8 166.0" stroke="#1414ff" stroke-width="1.300" stroke-dasharray="3 2.500" fill="none"/><path d="M1014.0 237.0 L1024.3 249.7" stroke="#1414ff" stroke-width="1.100" stroke-dasharray="3 3" fill="none"/><path d="M1172.4 226.7 L1182.7 248.5" stroke="#1414ff" stroke-width="1.100" stroke-dasharray="3 3" fill="none"/><path d="M113.0 234.0 L113.0 248.0" stroke="#1414ff" stroke-width="1.300" stroke-dasharray="3 2.500" fill="none"/><!--T--><path d="M38.5 256.0v9l-5.500-4.500z" fill="#ee8aee"/><!--T--><path d="M117.8 226.0v9l-5.500-4.500z" fill="#ee8aee"/><!--T--><path d="M117.8 246.5v9l-5.500-4.500z" fill="#a4eca4"/><!--T--><path d="M149.8 244.0v9l-5.500-4.500z" fill="#ee8aee"/><!--T--><path d="M149.8 268.5v9l-5.500-4.500z" fill="#a4eca4"/><!--T--><path d="M245.3 283.3v9l-5.500-4.500z" fill="#ee8aee"/><!--T--><path d="M277.3 280.1v9l-5.500-4.500z" fill="#a4eca4"/><!--T--><path d="M277.3 277.5v9l-5.500-4.500z" fill="#ee8aee"/><!--T--><path d="M310.5 213.2v9l-5.500-4.500z" fill="#ee8aee"/><!--T--><path d="M325.3 321.5v9l-5.500-4.500z" fill="#a4eca4"/><!--T--><path d="M438.3 295.9v9l-5.500-4.500z" fill="#ee8aee"/><!--T--><path d="M437.5 248.5v9l-5.500-4.500z" fill="#a4eca4"/><!--T--><path d="M437.5 247.0v9l-5.500-4.500z" fill="#ee8aee"/><!--T--><path d="M485.5 229.8v9l-5.500-4.500z" fill="#ee8aee"/><!--T--><path d="M646.1 88.8v9l-5.500-4.500z" fill="#a4eca4"/><!--T--><path d="M709.3 116.5v9l-5.500-4.500z" fill="#ee8aee"/><!--T--><path d="M709.3 125.5v9l-5.500-4.500z" fill="#a4eca4"/><!--T--><path d="M709.3 122.5v9l-5.500-4.500z" fill="#ee8aee"/><!--T--><path d="M726.3 143.5v9l-5.500-4.500z" fill="#ee8aee"/><!--T--><path d="M741.8 127.9v9l-5.500-4.500z" fill="#ee8aee"/><!--T--><path d="M741.8 164.0v9l-5.500-4.500z" fill="#a4eca4"/><!--T--><path d="M997.5 297.3v9l-5.500-4.500z" fill="#ee8aee"/><!--T--><path d="M1013.8 225.6v9l-5.500-4.500z" fill="#ee8aee"/><!--T--><path d="M1013.8 247.5v9l-5.500-4.500z" fill="#ee8aee"/><!--T--><path d="M1029.8 249.5v9l-5.500-4.500z" fill="#a4eca4"/><!--T--><path d="M1173.5 215.8v9l-5.500-4.500z" fill="#ee8aee"/><!--T--><path d="M1189.5 248.5v9l-5.500-4.500z" fill="#a4eca4"/><path d="M27.6 215.8h3v-2.300l3.700 3.500-3.700 3.500v-2.300h-3z" fill="#ff00ff" stroke="#fff" stroke-width="1.400" stroke-linejoin="round" paint-order="stroke"/><path d="M90.6 179.3h3v-2.300l3.700 3.500-3.700 3.500v-2.300h-3z" fill="#ff00ff" stroke="#fff" stroke-width="1.400" stroke-linejoin="round" paint-order="stroke"/><path d="M107.6 231.3h3v-2.300l3.700 3.500-3.700 3.500v-2.300h-3z" fill="#0000ff" stroke="#fff" stroke-width="1.400" stroke-linejoin="round" paint-order="stroke"/><path d="M107.6 237.8h3v-2.300l3.700 3.500-3.700 3.500v-2.300h-3z" fill="#0000ff" stroke="#fff" stroke-width="1.400" stroke-linejoin="round" paint-order="stroke"/><path d="M107.6 249.3h3v-2.300l3.700 3.500-3.700 3.500v-2.300h-3z" fill="#ff00ff" stroke="#fff" stroke-width="1.400" stroke-linejoin="round" paint-order="stroke"/><path d="M139.6 247.5h3v-2.300l3.700 3.500-3.700 3.500v-2.300h-3z" fill="#0000ff" stroke="#fff" stroke-width="1.400" stroke-linejoin="round" paint-order="stroke"/><path d="M139.6 271.8h3v-2.300l3.700 3.500-3.700 3.500v-2.300h-3z" fill="#ff00ff" stroke="#fff" stroke-width="1.400" stroke-linejoin="round" paint-order="stroke"/><path d="M235.1 286.6h3v-2.300l3.700 3.500-3.700 3.500v-2.300h-3z" fill="#0000ff" stroke="#fff" stroke-width="1.400" stroke-linejoin="round" paint-order="stroke"/><path d="M267.1 283.4h3v-2.300l3.700 3.500-3.700 3.500v-2.300h-3z" fill="#ff00ff" stroke="#fff" stroke-width="1.400" stroke-linejoin="round" paint-order="stroke"/><path d="M203.0 313.1h3v-2.300l3.700 3.500-3.700 3.500v-2.300h-3z" fill="#ff00ff" stroke="#fff" stroke-width="1.400" stroke-linejoin="round" paint-order="stroke"/><path d="M299.6 222.4h3v-2.300l3.700 3.500-3.700 3.500v-2.300h-3z" fill="#0000ff" stroke="#fff" stroke-width="1.400" stroke-linejoin="round" paint-order="stroke"/><path d="M315.1 323.2h3v-2.300l3.700 3.500-3.700 3.500v-2.300h-3z" fill="#ff00ff" stroke="#fff" stroke-width="1.400" stroke-linejoin="round" paint-order="stroke"/><path d="M428.1 299.2h3v-2.300l3.700 3.500-3.700 3.500v-2.300h-3z" fill="#0000ff" stroke="#fff" stroke-width="1.400" stroke-linejoin="round" paint-order="stroke"/><path d="M427.3 322.1h3v-2.300l3.700 3.500-3.700 3.500v-2.300h-3z" fill="#ff00ff" stroke="#fff" stroke-width="1.400" stroke-linejoin="round" paint-order="stroke"/><path d="M427.3 251.4h3v-2.300l3.700 3.500-3.700 3.500v-2.300h-3z" fill="#ff00ff" stroke="#fff" stroke-width="1.400" stroke-linejoin="round" paint-order="stroke"/><path d="M395.6 346.8h3v-2.300l3.700 3.500-3.700 3.500v-2.300h-3z" fill="#ff00ff" stroke="#fff" stroke-width="1.400" stroke-linejoin="round" paint-order="stroke"/><path d="M442.9 252.8h3v-2.300l3.700 3.500-3.700 3.500v-2.300h-3z" fill="#ff00ff" stroke="#fff" stroke-width="1.400" stroke-linejoin="round" paint-order="stroke"/><path d="M475.3 233.1h3v-2.300l3.700 3.500-3.700 3.500v-2.300h-3z" fill="#0000ff" stroke="#fff" stroke-width="1.400" stroke-linejoin="round" paint-order="stroke"/><path d="M587.1 184.1h3v-2.300l3.700 3.500-3.700 3.500v-2.300h-3z" fill="#0000ff" stroke="#fff" stroke-width="1.400" stroke-linejoin="round" paint-order="stroke"/><path d="M666.6 61.8h3v-2.300l3.700 3.500-3.700 3.500v-2.300h-3z" fill="#0000ff" stroke="#fff" stroke-width="1.400" stroke-linejoin="round" paint-order="stroke"/><path d="M699.1 106.4h3v-2.300l3.700 3.500-3.700 3.500v-2.300h-3z" fill="#0000ff" stroke="#fff" stroke-width="1.400" stroke-linejoin="round" paint-order="stroke"/><path d="M699.1 120.4h3v-2.300l3.700 3.500-3.700 3.500v-2.300h-3z" fill="#0000ff" stroke="#fff" stroke-width="1.400" stroke-linejoin="round" paint-order="stroke"/><path d="M699.1 127.8h3v-2.300l3.700 3.500-3.700 3.500v-2.300h-3z" fill="#ff00ff" stroke="#fff" stroke-width="1.400" stroke-linejoin="round" paint-order="stroke"/><path d="M716.1 146.8h3v-2.300l3.700 3.500-3.700 3.500v-2.300h-3z" fill="#ff00ff" stroke="#fff" stroke-width="1.400" stroke-linejoin="round" paint-order="stroke"/><path d="M731.6 131.2h3v-2.300l3.700 3.500-3.700 3.500v-2.300h-3z" fill="#0000ff" stroke="#fff" stroke-width="1.400" stroke-linejoin="round" paint-order="stroke"/><path d="M731.6 166.8h3v-2.300l3.700 3.500-3.700 3.500v-2.300h-3z" fill="#ff00ff" stroke="#fff" stroke-width="1.400" stroke-linejoin="round" paint-order="stroke"/><path d="M794.9 156.3h3v-2.300l3.700 3.500-3.700 3.500v-2.300h-3z" fill="#ff00ff" stroke="#fff" stroke-width="1.400" stroke-linejoin="round" paint-order="stroke"/><path d="M987.6 294.8h3v-2.300l3.700 3.500-3.700 3.500v-2.300h-3z" fill="#ff00ff" stroke="#fff" stroke-width="1.400" stroke-linejoin="round" paint-order="stroke"/><path d="M1003.6 228.9h3v-2.300l3.700 3.500-3.700 3.500v-2.300h-3z" fill="#0000ff" stroke="#fff" stroke-width="1.400" stroke-linejoin="round" paint-order="stroke"/><path d="M1003.6 248.5h3v-2.300l3.700 3.500-3.700 3.500v-2.300h-3z" fill="#ff00ff" stroke="#fff" stroke-width="1.400" stroke-linejoin="round" paint-order="stroke"/><path d="M1019.6 252.4h3v-2.300l3.700 3.500-3.700 3.500v-2.300h-3z" fill="#ff00ff" stroke="#fff" stroke-width="1.400" stroke-linejoin="round" paint-order="stroke"/><path d="M1163.3 219.1h3v-2.300l3.700 3.500-3.700 3.500v-2.300h-3z" fill="#0000ff" stroke="#fff" stroke-width="1.400" stroke-linejoin="round" paint-order="stroke"/><path d="M1179.3 251.4h3v-2.300l3.700 3.500-3.700 3.500v-2.300h-3z" fill="#ff00ff" stroke="#fff" stroke-width="1.400" stroke-linejoin="round" paint-order="stroke"/></svg>
<svg class="r" style="left:318px;top:100px;" width="9" height="7" viewBox="0 0 9 7"><path d="M0 6.500h9l-4.500-5.500z" fill="#fff"/></svg>
<div class="t" style="left:333.00px;top:94.50px;font-size:12.4px;color:#fff;letter-spacing:-0.906px;">EURUSD,H4</div>
<div class="t" style="left:405.50px;top:94.50px;font-size:12.4px;color:#fff;letter-spacing:0.205px;">1.16099 1.16109 1.16078 1.16106</div>
<div class="t" style="left:1737.00px;top:95.60px;font-size:12.4px;color:#fff;letter-spacing:-0.403px;">me_CloseAll v3d</div>
<svg class="r" style="left:1829px;top:98.8px;" width="15" height="15" viewBox="0 0 15 15"><circle cx="7.500" cy="7.500" r="6.300" fill="none" stroke="#fff" stroke-width="1.300"/><circle cx="5.300" cy="5.800" r="1" fill="#fff"/><circle cx="9.700" cy="5.800" r="1" fill="#fff"/><path d="M4 9q3.500 3.500 7 0" fill="none" stroke="#fff" stroke-width="1.200"/></svg>
<svg class="r" style="left:1533px;top:95px;" width="13" height="6" viewBox="0 0 13 6"><path d="M0 0h13l-6.500 6z" fill="#8c9db5"/></svg>
<div class="r" style="left:1849px;top:127px;width:2px;height:1px;background:#ffffff;"></div>
<div class="t" style="left:1856.00px;top:117.50px;font-size:12.4px;color:#fff;letter-spacing:0.024px;">1.17220</div>
<div class="r" style="left:1849px;top:176px;width:2px;height:1px;background:#ffffff;"></div>
<div class="t" style="left:1856.00px;top:166.50px;font-size:12.4px;color:#fff;letter-spacing:0.024px;">1.16970</div>
<div class="r" style="left:1849px;top:225px;width:2px;height:1px;background:#ffffff;"></div>
<div class="t" style="left:1856.00px;top:215.50px;font-size:12.4px;color:#fff;letter-spacing:0.024px;">1.16720</div>
<div class="r" style="left:1849px;top:274px;width:2px;height:1px;background:#ffffff;"></div>
<div class="t" style="left:1856.00px;top:264.50px;font-size:12.4px;color:#fff;letter-spacing:0.024px;">1.16465</div>
<div class="r" style="left:1849px;top:323px;width:2px;height:1px;background:#ffffff;"></div>
<div class="t" style="left:1856.00px;top:313.50px;font-size:12.4px;color:#fff;letter-spacing:0.024px;">1.16215</div>
<div class="r" style="left:1849px;top:372px;width:2px;height:1px;background:#ffffff;"></div>
<div class="t" style="left:1856.00px;top:362.50px;font-size:12.4px;color:#fff;letter-spacing:0.024px;">1.15965</div>
<div class="r" style="left:1849px;top:421px;width:2px;height:1px;background:#ffffff;"></div>
<div class="t" style="left:1856.00px;top:411.50px;font-size:12.4px;color:#fff;letter-spacing:0.024px;">1.15715</div>
<div class="r" style="left:1849px;top:470px;width:2px;height:1px;background:#ffffff;"></div>
<div class="t" style="left:1856.00px;top:460.50px;font-size:12.4px;color:#fff;letter-spacing:0.024px;">1.15465</div>
<div class="r" style="left:1850px;top:338px;width:56px;height:14px;background:#ffffff;"></div>
<div class="t" style="left:1856.00px;top:335.30px;font-size:12.4px;color:#000;letter-spacing:0.024px;">1.16106</div>
<div class="t" style="left:314.50px;top:491.00px;font-size:12.4px;color:#fff;letter-spacing:0.133px;">8 Oct 2025</div>
<div class="r" style="left:411px;top:490px;width:1px;height:3px;background:#ffffff;"></div>
<div class="t" style="left:410.50px;top:491.00px;font-size:12.4px;color:#fff;letter-spacing:0.217px;">9 Oct 04:00</div>
<div class="r" style="left:507px;top:490px;width:1px;height:3px;background:#ffffff;"></div>
<div class="t" style="left:506.50px;top:491.00px;font-size:12.4px;color:#fff;letter-spacing:0.191px;">10 Oct 04:00</div>
<div class="r" style="left:603px;top:490px;width:1px;height:3px;background:#ffffff;"></div>
<div class="t" style="left:602.50px;top:491.00px;font-size:12.4px;color:#fff;letter-spacing:0.191px;">13 Oct 04:00</div>
<div class="r" style="left:699px;top:490px;width:1px;height:3px;background:#ffffff;"></div>
<div class="t" style="left:698.50px;top:491.00px;font-size:12.4px;color:#fff;letter-spacing:0.191px;">14 Oct 04:00</div>
<div class="r" style="left:795px;top:490px;width:1px;height:3px;background:#ffffff;"></div>
<div class="t" style="left:794.50px;top:491.00px;font-size:12.4px;color:#fff;letter-spacing:0.191px;">15 Oct 04:00</div>
<div class="r" style="left:891px;top:490px;width:1px;height:3px;background:#ffffff;"></div>
<div class="t" style="left:890.50px;top:491.00px;font-size:12.4px;color:#fff;letter-spacing:0.191px;">16 Oct 04:00</div>
<div class="r" style="left:987px;top:490px;width:1px;height:3px;background:#ffffff;"></div>
<div class="t" style="left:986.50px;top:491.00px;font-size:12.4px;color:#fff;letter-spacing:0.191px;">17 Oct 04:00</div>
<div class="r" style="left:1083px;top:490px;width:1px;height:3px;background:#ffffff;"></div>
<div class="t" style="left:1082.50px;top:491.00px;font-size:12.4px;color:#fff;letter-spacing:0.191px;">20 Oct 04:00</div>
<div class="r" style="left:1179px;top:490px;width:1px;height:3px;background:#ffffff;"></div>
<div class="t" style="left:1178.50px;top:491.00px;font-size:12.4px;color:#fff;letter-spacing:0.191px;">21 Oct 04:00</div>
<div class="r" style="left:1275px;top:490px;width:1px;height:3px;background:#ffffff;"></div>
<div class="t" style="left:1274.50px;top:491.00px;font-size:12.4px;color:#fff;letter-spacing:0.191px;">22 Oct 04:00</div>
<div class="r" style="left:1371px;top:490px;width:1px;height:3px;background:#ffffff;"></div>
<div class="t" style="left:1370.50px;top:491.00px;font-size:12.4px;color:#fff;letter-spacing:0.191px;">23 Oct 04:00</div>
<div class="r" style="left:1467px;top:490px;width:1px;height:3px;background:#ffffff;"></div>
<div class="t" style="left:1466.50px;top:491.00px;font-size:12.4px;color:#fff;letter-spacing:0.191px;">24 Oct 04:00</div>
<div class="t" style="left:1499.30px;top:306.20px;font-size:19.6px;color:#ff0000;width:348px;overflow:hidden;letter-spacing:0.368px;">SL: -2.22$ / 22.2p/AT:11.10 (#677025805)</div>
<div class="t" style="left:1499.30px;top:326.40px;font-size:19.6px;color:#ff0000;width:348px;overflow:hidden;letter-spacing:0.368px;">SL: -8.88$ / 22.2p/AT:11.10 (#677025793)</div>
<div class="r" style="left:318px;top:117px;width:60px;height:27px;background:linear-gradient(180deg,#f85454 0%,#e83a3a 100%);"></div>
<div class="r" style="left:510px;top:117px;width:59px;height:27px;background:linear-gradient(180deg,#f85454 0%,#e83a3a 100%);"></div>
<div class="r" style="left:318px;top:144px;width:125px;height:45px;background:linear-gradient(180deg,#e63636 0%,#b40808 100%);"></div>
<div class="r" style="left:445px;top:144px;width:124px;height:45px;background:linear-gradient(180deg,#e63636 0%,#b40808 100%);"></div>
<div class="r" style="left:322px;top:143px;width:52px;height:1px;background:#b03030;"></div>
<div class="r" style="left:514px;top:143px;width:52px;height:1px;background:#b03030;"></div>
<div class="t" style="left:332.00px;top:120.00px;font-size:14.6px;color:#fff;letter-spacing:-1.428px;">SELL</div>
<div class="t" style="left:525.00px;top:120.00px;font-size:14.6px;color:#fff;letter-spacing:-1.007px;">BUY</div>
<div class="r" style="left:380px;top:117px;width:127px;height:25px;background:#8a8a8a;"></div>
<div class="r" style="left:381px;top:118px;width:23px;height:23px;background:linear-gradient(180deg,#f4f4f4,#dcdcdc);"></div>
<div class="r" style="left:405px;top:118px;width:77px;height:23px;background:#ffffff;"></div>
<div class="r" style="left:483px;top:118px;width:23px;height:23px;background:linear-gradient(180deg,#f4f4f4,#dcdcdc);"></div>
<svg class="r" style="left:388px;top:128px;" width="8" height="5" viewBox="0 0 8 5"><path d="M0 0h8l-4 4.500z" fill="#000"/></svg>
<svg class="r" style="left:490px;top:127px;" width="8" height="5" viewBox="0 0 8 5"><path d="M0 4.500h8l-4-4.500z" fill="#000"/></svg>
<div class="t" style="left:449.50px;top:119.50px;font-size:14.6px;color:#000;letter-spacing:-0.352px;">0.02</div>
<div class="t" style="left:337.50px;top:164.00px;font-size:14.5px;color:#fff;font-weight:bold;letter-spacing:0.446px;">1.16</div>
<div class="t" style="left:374.00px;top:156.50px;font-size:37px;color:#fff;letter-spacing:-2.078px;line-height:40px;height:40px;margin-top:-10px;">10</div>
<div class="t" style="left:416.00px;top:146.30px;font-size:16.5px;color:#fff;font-weight:bold;">6</div>
<div class="t" style="left:464.00px;top:164.00px;font-size:14.5px;color:#fff;font-weight:bold;letter-spacing:0.446px;">1.16</div>
<div class="t" style="left:500.50px;top:156.50px;font-size:37px;color:#fff;letter-spacing:-2.078px;line-height:40px;height:40px;margin-top:-10px;">10</div>
<div class="t" style="left:542.50px;top:146.30px;font-size:16.5px;color:#fff;font-weight:bold;">6</div>
<div class="r" style="left:317px;top:464px;width:70px;height:22px;background:#008080;border:1px solid #ffe600;box-sizing:border-box;border-radius:2px;"></div>
<div class="t" style="left:323.30px;top:465.70px;font-size:13.4px;color:#fff;font-weight:bold;letter-spacing:-0.093px;">Close All</div>
<div class="r" style="left:392px;top:464px;width:70px;height:22px;background:#008080;border:1px solid #ffe600;box-sizing:border-box;border-radius:2px;"></div>
<div class="t" style="left:395.30px;top:465.70px;font-size:13.4px;color:#fff;font-weight:bold;letter-spacing:0.143px;">Delete All</div>
<div class="r" style="left:482px;top:464px;width:70px;height:22px;background:#dc143c;border:1px solid #ffe600;box-sizing:border-box;border-radius:2px;"></div>
<div class="t" style="left:492.30px;top:465.70px;font-size:13.4px;color:#fff;font-weight:bold;letter-spacing:-0.395px;">SL = BE</div>
<div class="r" style="left:557px;top:464px;width:70px;height:22px;background:#dc143c;border:1px solid #ffe600;box-sizing:border-box;border-radius:2px;"></div>
<div class="t" style="left:572.30px;top:465.70px;font-size:13.4px;color:#fff;font-weight:bold;letter-spacing:-0.267px;">SL + 1</div>
<div class="r" style="left:632px;top:464px;width:70px;height:22px;background:#0000ff;border:1px solid #ffe600;box-sizing:border-box;border-radius:2px;"></div>
<div class="t" style="left:635.80px;top:465.70px;font-size:13.4px;color:#fff;font-weight:bold;letter-spacing:-0.007px;">Delete SL</div>
<div class="r" style="left:717px;top:464px;width:90px;height:22px;background:#ff1493;border:1px solid #ffe600;box-sizing:border-box;border-radius:2px;overflow:hidden;"></div>
<div class="r" style="left:718px;top:464px;width:88px;height:22px;overflow:hidden;"><div class="t" style="left:-3.100px;top:1.700px;font-size:13.4px;color:#fff;font-weight:bold;letter-spacing:.05px">Change SL &gt;&gt;</div></div>
<div class="r" style="left:807px;top:464px;width:90px;height:22px;background:#f0f0f0;border:1px solid #ff1493;box-sizing:border-box;"></div>
<div class="t" style="left:822.05px;top:466.30px;font-size:16px;color:#ff1493;letter-spacing:0.095px;">1.16320</div>
<div class="r" style="left:907px;top:464px;width:90px;height:22px;background:#006400;border:1px solid #ffe600;box-sizing:border-box;border-radius:2px;overflow:hidden;"></div>
<div class="r" style="left:908px;top:464px;width:88px;height:22px;overflow:hidden;"><div class="t" style="left:-3.100px;top:1.700px;font-size:13.4px;color:#fff;font-weight:bold;letter-spacing:.05px">Change TP &gt;&gt;</div></div>
<div class="r" style="left:997px;top:464px;width:90px;height:22px;background:#f0f0f0;border:1px solid #006400;box-sizing:border-box;"></div>
<div class="t" style="left:1012.05px;top:466.30px;font-size:16px;color:#006400;letter-spacing:0.095px;">1.15176</div>
<div class="r" style="left:310px;top:515px;width:1604px;height:27px;background:#f0f0f0;"></div>
<div class="r" style="left:311px;top:515px;width:1px;height:25px;background:#6a6a6a;"></div>
<div class="r" style="left:0px;top:539px;width:312px;height:1px;background:#808080;"></div>
<div class="r" style="left:312px;top:540px;width:1602px;height:1px;background:#f8f8f8;"></div>
<div class="r" style="left:311px;top:515px;width:1603px;height:1px;background:#000000;"></div>
<div class="r" style="left:421px;top:515px;width:104px;height:24px;background:#ffffff;border:1px solid #000;border-top:none;box-sizing:border-box;box-shadow:1px 1px 0 #8a8a8a;"></div>
<div class="t" style="left:330.00px;top:516.90px;font-size:15px;color:#6d6d6d;letter-spacing:-0.964px;">EURUSD,H4</div>
<div class="t" style="left:434.00px;top:516.90px;font-size:15px;color:#000;letter-spacing:-0.964px;">EURUSD,H4</div>
<div class="t" style="left:538.00px;top:516.90px;font-size:15px;color:#6d6d6d;letter-spacing:-0.965px;">GBPUSD,H4</div>
<div class="t" style="left:642.00px;top:516.90px;font-size:15px;color:#6d6d6d;letter-spacing:-0.965px;">GBPUSD,H4</div>
<div class="t" style="left:747.00px;top:516.90px;font-size:15px;color:#6d6d6d;letter-spacing:-0.954px;">USDJPY,H4</div>
<div class="t" style="left:847.00px;top:516.90px;font-size:15px;color:#6d6d6d;letter-spacing:-0.954px;">USDJPY,H4</div>
<div class="t" style="left:946.00px;top:516.90px;font-size:15px;color:#6d6d6d;letter-spacing:-0.631px;">USDCAD,H4</div>
<div class="t" style="left:1054.00px;top:516.90px;font-size:15px;color:#6d6d6d;letter-spacing:-0.631px;">USDCAD,H4</div>
<div class="t" style="left:1162.00px;top:516.90px;font-size:15px;color:#6d6d6d;letter-spacing:-1.176px;">EURJPY,H4</div>
<div class="t" style="left:1258.00px;top:516.90px;font-size:15px;color:#6d6d6d;letter-spacing:-1.288px;">GBPJPY,H4</div>
<div class="t" style="left:1354.00px;top:516.90px;font-size:15px;color:#6d6d6d;letter-spacing:-0.964px;">EURUSD,H4</div>
<div class="t" style="left:1458.00px;top:516.90px;font-size:15px;color:#6d6d6d;letter-spacing:-0.631px;">USDCAD,H4</div>
<div class="t" style="left:1566.00px;top:516.90px;font-size:15px;color:#6d6d6d;letter-spacing:-0.631px;">USDCAD,H4</div>
<div class="t" style="left:1674.00px;top:516.90px;font-size:15px;color:#6d6d6d;letter-spacing:-0.965px;">GBPUSD,H4</div>
<div class="r" style="left:629px;top:518px;width:1px;height:19px;background:#6d6d6d;"></div>
<div class="r" style="left:733px;top:518px;width:1px;height:19px;background:#6d6d6d;"></div>
<div class="r" style="left:833px;top:518px;width:1px;height:19px;background:#6d6d6d;"></div>
<div class="r" style="left:933px;top:518px;width:1px;height:19px;background:#6d6d6d;"></div>
<div class="r" style="left:1041px;top:518px;width:1px;height:19px;background:#6d6d6d;"></div>
<div class="r" style="left:1149px;top:518px;width:1px;height:19px;background:#6d6d6d;"></div>
<div class="r" style="left:1245px;top:518px;width:1px;height:19px;background:#6d6d6d;"></div>
<div class="r" style="left:1341px;top:518px;width:1px;height:19px;background:#6d6d6d;"></div>
<div class="r" style="left:1445px;top:518px;width:1px;height:19px;background:#6d6d6d;"></div>
<div class="r" style="left:1553px;top:518px;width:1px;height:19px;background:#6d6d6d;"></div>
<div class="r" style="left:1661px;top:518px;width:1px;height:19px;background:#6d6d6d;"></div>
<div class="r" style="left:1765px;top:518px;width:1px;height:19px;background:#6d6d6d;"></div>
<svg class="r" style="left:1873px;top:522px;" width="6" height="9" viewBox="0 0 6 9"><path d="M5.500 0v8.500l-5-4.250z" fill="#a0a0a0"/></svg>
<svg class="r" style="left:1897px;top:522px;" width="6" height="9" viewBox="0 0 6 9"><path d="M.500 0v8.500l5-4.250z" fill="#a0a0a0"/></svg>
<div class="r" style="left:0px;top:563px;width:13px;height:308px;background:linear-gradient(180deg,#d9e4f0 0%,#c6d5e7 50%,#bccde2 100%);"></div>
<svg class="r" style="left:0px;top:548px;" width="9" height="8" viewBox="0 0 9 8"><path d="M.5 .5L7.500 7M7.500 .5L.500 7" stroke="#000" stroke-width="1.400"/></svg>
<div class="r" style="left:14px;top:545px;width:1894px;height:1px;background:#a0a0a0;"></div>
<div class="r" style="left:14px;top:545px;width:1px;height:326px;background:#a0a0a0;"></div>
<div class="r" style="left:15px;top:546px;width:1893px;height:325px;background:#ffffff;"></div>
<div class="r" style="left:1908px;top:545px;width:6px;height:326px;background:#f0f0f0;"></div>
<div class="t" style="left:21.30px;top:549.50px;font-size:14.6px;color:#000;letter-spacing:0.137px;">Order</div>
<div class="t" style="left:423.80px;top:549.50px;font-size:14.6px;color:#000;">Time</div>
<div class="t" style="left:554.05px;top:549.50px;font-size:14.6px;color:#000;">Type</div>
<div class="t" style="left:657.30px;top:549.50px;font-size:14.6px;color:#000;">Size</div>
<div class="t" style="left:927.44px;top:549.50px;font-size:14.6px;color:#000;">Price</div>
<div class="t" style="left:1074.68px;top:549.50px;font-size:14.6px;color:#000;">S / L</div>
<div class="t" style="left:1218.14px;top:549.50px;font-size:14.6px;color:#000;">T / P</div>
<div class="t" style="left:1359.44px;top:549.50px;font-size:14.6px;color:#000;">Price</div>
<div class="t" style="left:1456.39px;top:549.50px;font-size:14.6px;color:#000;">Commission</div>
<div class="t" style="left:1644.18px;top:549.50px;font-size:14.6px;color:#000;">Swap</div>
<div class="t" style="left:747.50px;top:549.50px;font-size:14.6px;color:#000;letter-spacing:0.053px;">Symbol</div>
<svg class="r" style="left:807px;top:556px;" width="6" height="7" viewBox="0 0 6 7"><path d="M1 6L5 1" stroke="#707070" stroke-width="1"/></svg>
<div class="t" style="left:1865.50px;top:549.50px;font-size:14.6px;color:#000;letter-spacing:0.321px;">Profit</div>
<div class="r" style="left:200px;top:546px;width:1px;height:26px;background:#e5e5e5;"></div>
<div class="r" style="left:460px;top:546px;width:1px;height:26px;background:#e5e5e5;"></div>
<div class="r" style="left:590px;top:546px;width:1px;height:26px;background:#e5e5e5;"></div>
<div class="r" style="left:690px;top:546px;width:1px;height:26px;background:#e5e5e5;"></div>
<div class="r" style="left:822px;top:546px;width:1px;height:26px;background:#e5e5e5;"></div>
<div class="r" style="left:965px;top:546px;width:1px;height:26px;background:#e5e5e5;"></div>
<div class="r" style="left:1109px;top:546px;width:1px;height:26px;background:#e5e5e5;"></div>
<div class="r" style="left:1253px;top:546px;width:1px;height:26px;background:#e5e5e5;"></div>
<div class="r" style="left:1397px;top:546px;width:1px;height:26px;background:#e5e5e5;"></div>
<div class="r" style="left:1541px;top:546px;width:1px;height:26px;background:#e5e5e5;"></div>
<div class="r" style="left:1685px;top:546px;width:1px;height:26px;background:#e5e5e5;"></div>
<div class="r" style="left:15px;top:572px;width:1893px;height:1px;background:#d0d0d0;"></div>
<div class="r" style="left:15px;top:573px;width:1893px;height:24px;background:#fff;"></div>
<div class="r" style="left:15px;top:597px;width:1893px;height:1px;background:#d2d2d2;"></div>
<div class="r" style="left:200px;top:573px;width:1px;height:25px;background:#d2d2d2;"></div>
<div class="r" style="left:460px;top:573px;width:1px;height:25px;background:#d2d2d2;"></div>
<div class="r" style="left:590px;top:573px;width:1px;height:25px;background:#d2d2d2;"></div>
<div class="r" style="left:690px;top:573px;width:1px;height:25px;background:#d2d2d2;"></div>
<div class="r" style="left:822px;top:573px;width:1px;height:25px;background:#d2d2d2;"></div>
<div class="r" style="left:965px;top:573px;width:1px;height:25px;background:#d2d2d2;"></div>
<div class="r" style="left:1109px;top:573px;width:1px;height:25px;background:#d2d2d2;"></div>
<div class="r" style="left:1253px;top:573px;width:1px;height:25px;background:#d2d2d2;"></div>
<div class="r" style="left:1397px;top:573px;width:1px;height:25px;background:#d2d2d2;"></div>
<div class="r" style="left:1541px;top:573px;width:1px;height:25px;background:#d2d2d2;"></div>
<div class="r" style="left:1685px;top:573px;width:1px;height:25px;background:#d2d2d2;"></div>
<svg class="r" style="left:18px;top:575px;" width="18" height="20" viewBox="0 0 18 20"><path d="M1.500 1.500h9l4 4v12.500h-13z" fill="#fcfcfc" stroke="#7c7c7c" stroke-width="1.200"/><path d="M10.500 1.500v4h4" fill="#e4e4e4" stroke="#7c7c7c" stroke-width="1"/><circle cx="13.500" cy="15.500" r="4" fill="#e8481c" stroke="#b8300c" stroke-width=".8"/><circle cx="12.600" cy="14.300" r="1.500" fill="#fff" opacity=".35"/></svg>
<div class="t" style="left:42.00px;top:573.90px;font-size:14.5px;color:#000;letter-spacing:-0.062px;">677025793</div>
<div class="t" style="left:328.10px;top:573.90px;font-size:14.5px;color:#000;letter-spacing:-0.232px;">2025.10.24 12:02:13</div>
<div class="t" style="left:564.94px;top:573.90px;font-size:14.5px;color:#000;">sell</div>
<div class="t" style="left:660.50px;top:573.90px;font-size:14.5px;color:#000;letter-spacing:-0.504px;">0.04</div>
<div class="t" style="left:774.37px;top:573.90px;font-size:14.5px;color:#000;">eurusd</div>
<div class="t" style="left:911.35px;top:573.90px;font-size:14.5px;color:#000;letter-spacing:-0.293px;">1.16098</div>
<div class="t" style="left:1055.35px;top:573.90px;font-size:14.5px;color:#000;letter-spacing:-0.293px;">1.16320</div>
<div class="t" style="left:1199.35px;top:573.90px;font-size:14.5px;color:#000;letter-spacing:-0.293px;">1.15326</div>
<div class="t" style="left:1343.35px;top:573.90px;font-size:14.5px;color:#000;letter-spacing:-0.293px;">1.16106</div>
<div class="t" style="left:1505.50px;top:573.90px;font-size:14.5px;color:#000;letter-spacing:-0.169px;">-0.24</div>
<div class="t" style="left:1655.50px;top:573.90px;font-size:14.5px;color:#000;letter-spacing:-0.504px;">0.00</div>
<div class="t" style="left:1845.60px;top:573.90px;font-size:14.5px;color:#000;letter-spacing:-0.169px;">-0.32</div>
<svg class="r" style="left:1888px;top:578px;" width="13" height="13" viewBox="0 0 13 13"><path d="M1 1L12 12M12 1L1 12" stroke="#707070" stroke-width="1.300"/></svg>
<div class="r" style="left:15px;top:598px;width:1893px;height:24px;background:#ebebeb;"></div>
<div class="r" style="left:15px;top:622px;width:1893px;height:1px;background:#d2d2d2;"></div>
<div class="r" style="left:200px;top:598px;width:1px;height:25px;background:#d2d2d2;"></div>
<div class="r" style="left:460px;top:598px;width:1px;height:25px;background:#d2d2d2;"></div>
<div class="r" style="left:590px;top:598px;width:1px;height:25px;background:#d2d2d2;"></div>
<div class="r" style="left:690px;top:598px;width:1px;height:25px;background:#d2d2d2;"></div>
<div class="r" style="left:822px;top:598px;width:1px;height:25px;background:#d2d2d2;"></div>
<div class="r" style="left:965px;top:598px;width:1px;height:25px;background:#d2d2d2;"></div>
<div class="r" style="left:1109px;top:598px;width:1px;height:25px;background:#d2d2d2;"></div>
<div class="r" style="left:1253px;top:598px;width:1px;height:25px;background:#d2d2d2;"></div>
<div class="r" style="left:1397px;top:598px;width:1px;height:25px;background:#d2d2d2;"></div>
<div class="r" style="left:1541px;top:598px;width:1px;height:25px;background:#d2d2d2;"></div>
<div class="r" style="left:1685px;top:598px;width:1px;height:25px;background:#d2d2d2;"></div>
<svg class="r" style="left:18px;top:600px;" width="18" height="20" viewBox="0 0 18 20"><path d="M1.500 1.500h9l4 4v12.500h-13z" fill="#fcfcfc" stroke="#7c7c7c" stroke-width="1.200"/><path d="M10.500 1.500v4h4" fill="#e4e4e4" stroke="#7c7c7c" stroke-width="1"/><circle cx="13.500" cy="15.500" r="4" fill="#e8481c" stroke="#b8300c" stroke-width=".8"/><circle cx="12.600" cy="14.300" r="1.500" fill="#fff" opacity=".35"/></svg>
<div class="t" style="left:42.00px;top:598.90px;font-size:14.5px;color:#000;letter-spacing:-0.062px;">677025805</div>
<div class="t" style="left:328.10px;top:598.90px;font-size:14.5px;color:#000;letter-spacing:-0.232px;">2025.10.24 12:02:27</div>
<div class="t" style="left:564.94px;top:598.90px;font-size:14.5px;color:#000;">sell</div>
<div class="t" style="left:660.50px;top:598.90px;font-size:14.5px;color:#000;letter-spacing:-0.504px;">0.01</div>
<div class="t" style="left:774.37px;top:598.90px;font-size:14.5px;color:#000;">eurusd</div>
<div class="t" style="left:911.35px;top:598.90px;font-size:14.5px;color:#000;letter-spacing:-0.293px;">1.16098</div>
<div class="t" style="left:1055.35px;top:598.90px;font-size:14.5px;color:#000;letter-spacing:-0.293px;">1.16320</div>
<div class="t" style="left:1199.35px;top:598.90px;font-size:14.5px;color:#000;letter-spacing:-0.293px;">1.15326</div>
<div class="t" style="left:1343.35px;top:598.90px;font-size:14.5px;color:#000;letter-spacing:-0.293px;">1.16106</div>
<div class="t" style="left:1505.50px;top:598.90px;font-size:14.5px;color:#000;letter-spacing:-0.169px;">-0.06</div>
<div class="t" style="left:1655.50px;top:598.90px;font-size:14.5px;color:#000;letter-spacing:-0.504px;">0.00</div>
<div class="t" style="left:1845.60px;top:598.90px;font-size:14.5px;color:#000;letter-spacing:-0.169px;">-0.08</div>
<svg class="r" style="left:1888px;top:603px;" width="13" height="13" viewBox="0 0 13 13"><path d="M1 1L12 12M12 1L1 12" stroke="#707070" stroke-width="1.300"/></svg>
<div class="r" style="left:15px;top:623px;width:1893px;height:24px;background:#fff;"></div>
<div class="r" style="left:15px;top:647px;width:1893px;height:1px;background:#d2d2d2;"></div>
<div class="r" style="left:200px;top:623px;width:1px;height:25px;background:#d2d2d2;"></div>
<div class="r" style="left:460px;top:623px;width:1px;height:25px;background:#d2d2d2;"></div>
<div class="r" style="left:590px;top:623px;width:1px;height:25px;background:#d2d2d2;"></div>
<div class="r" style="left:690px;top:623px;width:1px;height:25px;background:#d2d2d2;"></div>
<div class="r" style="left:822px;top:623px;width:1px;height:25px;background:#d2d2d2;"></div>
<div class="r" style="left:965px;top:623px;width:1px;height:25px;background:#d2d2d2;"></div>
<div class="r" style="left:1109px;top:623px;width:1px;height:25px;background:#d2d2d2;"></div>
<div class="r" style="left:1253px;top:623px;width:1px;height:25px;background:#d2d2d2;"></div>
<div class="r" style="left:1397px;top:623px;width:1px;height:25px;background:#d2d2d2;"></div>
<div class="r" style="left:1541px;top:623px;width:1px;height:25px;background:#d2d2d2;"></div>
<div class="r" style="left:1685px;top:623px;width:1px;height:25px;background:#d2d2d2;"></div>
<svg class="r" style="left:18px;top:625px;" width="18" height="20" viewBox="0 0 18 20"><path d="M1.500 1.500h9l4 4v12.500h-13z" fill="#fcfcfc" stroke="#7c7c7c" stroke-width="1.200"/><path d="M10.500 1.500v4h4" fill="#e4e4e4" stroke="#7c7c7c" stroke-width="1"/><circle cx="13.500" cy="15.500" r="4" fill="#e8481c" stroke="#b8300c" stroke-width=".8"/><circle cx="12.600" cy="14.300" r="1.500" fill="#fff" opacity=".35"/></svg>
<div class="t" style="left:42.00px;top:623.90px;font-size:14.5px;color:#000;letter-spacing:-0.062px;">676950726</div>
<div class="t" style="left:328.10px;top:623.90px;font-size:14.5px;color:#000;letter-spacing:-0.232px;">2025.10.23 19:49:41</div>
<div class="t" style="left:564.94px;top:623.90px;font-size:14.5px;color:#000;">sell</div>
<div class="t" style="left:660.50px;top:623.90px;font-size:14.5px;color:#000;letter-spacing:-0.504px;">0.02</div>
<div class="t" style="left:771.14px;top:623.90px;font-size:14.5px;color:#000;">gbpusd</div>
<div class="t" style="left:911.35px;top:623.90px;font-size:14.5px;color:#000;letter-spacing:-0.293px;">1.33148</div>
<div class="t" style="left:1055.35px;top:623.90px;font-size:14.5px;color:#000;letter-spacing:-0.293px;">1.33520</div>
<div class="t" style="left:1199.35px;top:623.90px;font-size:14.5px;color:#000;letter-spacing:-0.293px;">1.32445</div>
<div class="t" style="left:1343.35px;top:623.90px;font-size:14.5px;color:#000;letter-spacing:-0.293px;">1.33201</div>
<div class="t" style="left:1505.50px;top:623.90px;font-size:14.5px;color:#000;letter-spacing:-0.169px;">-0.12</div>
<div class="t" style="left:1649.50px;top:623.90px;font-size:14.5px;color:#000;letter-spacing:-0.169px;">-0.01</div>
<div class="t" style="left:1845.60px;top:623.90px;font-size:14.5px;color:#000;letter-spacing:-0.169px;">-1.06</div>
<svg class="r" style="left:1888px;top:628px;" width="13" height="13" viewBox="0 0 13 13"><path d="M1 1L12 12M12 1L1 12" stroke="#707070" stroke-width="1.300"/></svg>
<div class="r" style="left:15px;top:647px;width:1893px;height:25px;background:#0078d7;"></div>
<div class="r" style="left:15px;top:672px;width:1893px;height:1px;background:#d2d2d2;"></div>
<div class="r" style="left:200px;top:647px;width:1px;height:25px;background:#5a9fe0;"></div>
<div class="r" style="left:460px;top:647px;width:1px;height:25px;background:#5a9fe0;"></div>
<div class="r" style="left:590px;top:647px;width:1px;height:25px;background:#5a9fe0;"></div>
<div class="r" style="left:690px;top:647px;width:1px;height:25px;background:#5a9fe0;"></div>
<div class="r" style="left:822px;top:647px;width:1px;height:25px;background:#5a9fe0;"></div>
<div class="r" style="left:965px;top:647px;width:1px;height:25px;background:#5a9fe0;"></div>
<div class="r" style="left:1109px;top:647px;width:1px;height:25px;background:#5a9fe0;"></div>
<div class="r" style="left:1253px;top:647px;width:1px;height:25px;background:#5a9fe0;"></div>
<div class="r" style="left:1397px;top:647px;width:1px;height:25px;background:#5a9fe0;"></div>
<div class="r" style="left:1541px;top:647px;width:1px;height:25px;background:#5a9fe0;"></div>
<div class="r" style="left:1685px;top:647px;width:1px;height:25px;background:#5a9fe0;"></div>
<svg class="r" style="left:18px;top:650px;" width="18" height="20" viewBox="0 0 18 20"><path d="M1.500 1.500h9l4 4v12.500h-13z" fill="#fcfcfc" stroke="#7c7c7c" stroke-width="1.200"/><path d="M10.500 1.500v4h4" fill="#e4e4e4" stroke="#7c7c7c" stroke-width="1"/><circle cx="13.500" cy="15.500" r="4" fill="#e8481c" stroke="#b8300c" stroke-width=".8"/><circle cx="12.600" cy="14.300" r="1.500" fill="#fff" opacity=".35"/></svg>
<div class="t" style="left:42.00px;top:648.90px;font-size:14.5px;color:#fff;letter-spacing:-0.062px;">677003771</div>
<div class="t" style="left:328.10px;top:648.90px;font-size:14.5px;color:#fff;letter-spacing:-0.232px;">2025.10.24 09:22:22</div>
<div class="t" style="left:564.94px;top:648.90px;font-size:14.5px;color:#fff;">sell</div>
<div class="t" style="left:660.50px;top:648.90px;font-size:14.5px;color:#fff;letter-spacing:-0.504px;">0.10</div>
<div class="t" style="left:771.95px;top:648.90px;font-size:14.5px;color:#fff;">usdcad</div>
<div class="t" style="left:911.35px;top:648.90px;font-size:14.5px;color:#fff;letter-spacing:-0.293px;">1.40184</div>
<div class="t" style="left:1055.35px;top:648.90px;font-size:14.5px;color:#fff;letter-spacing:-0.293px;">1.40328</div>
<div class="t" style="left:1199.35px;top:648.90px;font-size:14.5px;color:#fff;letter-spacing:-0.293px;">1.39522</div>
<div class="t" style="left:1343.35px;top:648.90px;font-size:14.5px;color:#fff;letter-spacing:-0.293px;">1.40206</div>
<div class="t" style="left:1505.50px;top:648.90px;font-size:14.5px;color:#fff;letter-spacing:-0.169px;">-0.60</div>
<div class="t" style="left:1655.50px;top:648.90px;font-size:14.5px;color:#fff;letter-spacing:-0.504px;">0.00</div>
<div class="t" style="left:1845.60px;top:648.90px;font-size:14.5px;color:#fff;letter-spacing:-0.169px;">-1.57</div>
<svg class="r" style="left:1888px;top:653px;" width="13" height="13" viewBox="0 0 13 13"><path d="M1 1L12 12M12 1L1 12" stroke="#e0e0e0" stroke-width="1.300"/></svg>
<div class="r" style="left:15px;top:673px;width:1893px;height:24px;background:#fff;"></div>
<div class="r" style="left:15px;top:697px;width:1893px;height:1px;background:#d2d2d2;"></div>
<div class="r" style="left:200px;top:673px;width:1px;height:25px;background:#d2d2d2;"></div>
<div class="r" style="left:460px;top:673px;width:1px;height:25px;background:#d2d2d2;"></div>
<div class="r" style="left:590px;top:673px;width:1px;height:25px;background:#d2d2d2;"></div>
<div class="r" style="left:690px;top:673px;width:1px;height:25px;background:#d2d2d2;"></div>
<div class="r" style="left:822px;top:673px;width:1px;height:25px;background:#d2d2d2;"></div>
<div class="r" style="left:965px;top:673px;width:1px;height:25px;background:#d2d2d2;"></div>
<div class="r" style="left:1109px;top:673px;width:1px;height:25px;background:#d2d2d2;"></div>
<div class="r" style="left:1253px;top:673px;width:1px;height:25px;background:#d2d2d2;"></div>
<div class="r" style="left:1397px;top:673px;width:1px;height:25px;background:#d2d2d2;"></div>
<div class="r" style="left:1541px;top:673px;width:1px;height:25px;background:#d2d2d2;"></div>
<div class="r" style="left:1685px;top:673px;width:1px;height:25px;background:#d2d2d2;"></div>
<svg class="r" style="left:18px;top:675px;" width="18" height="20" viewBox="0 0 18 20"><path d="M1.500 1.500h9l4 4v12.500h-13z" fill="#fcfcfc" stroke="#7c7c7c" stroke-width="1.200"/><path d="M10.500 1.500v4h4" fill="#e4e4e4" stroke="#7c7c7c" stroke-width="1"/><circle cx="13.500" cy="15.500" r="4" fill="#e8481c" stroke="#b8300c" stroke-width=".8"/><circle cx="12.600" cy="14.300" r="1.500" fill="#fff" opacity=".35"/></svg>
<div class="t" style="left:42.00px;top:673.90px;font-size:14.5px;color:#000;letter-spacing:-0.062px;">677003776</div>
<div class="t" style="left:328.10px;top:673.90px;font-size:14.5px;color:#000;letter-spacing:-0.232px;">2025.10.24 09:22:25</div>
<div class="t" style="left:564.94px;top:673.90px;font-size:14.5px;color:#000;">sell</div>
<div class="t" style="left:660.50px;top:673.90px;font-size:14.5px;color:#000;letter-spacing:-0.504px;">0.05</div>
<div class="t" style="left:771.95px;top:673.90px;font-size:14.5px;color:#000;">usdcad</div>
<div class="t" style="left:911.35px;top:673.90px;font-size:14.5px;color:#000;letter-spacing:-0.293px;">1.40184</div>
<div class="t" style="left:1055.35px;top:673.90px;font-size:14.5px;color:#000;letter-spacing:-0.293px;">1.40328</div>
<div class="t" style="left:1199.35px;top:673.90px;font-size:14.5px;color:#000;letter-spacing:-0.293px;">1.39522</div>
<div class="t" style="left:1343.35px;top:673.90px;font-size:14.5px;color:#000;letter-spacing:-0.293px;">1.40206</div>
<div class="t" style="left:1505.50px;top:673.90px;font-size:14.5px;color:#000;letter-spacing:-0.169px;">-0.30</div>
<div class="t" style="left:1655.50px;top:673.90px;font-size:14.5px;color:#000;letter-spacing:-0.504px;">0.00</div>
<div class="t" style="left:1845.60px;top:673.90px;font-size:14.5px;color:#000;letter-spacing:-0.169px;">-0.78</div>
<svg class="r" style="left:1888px;top:678px;" width="13" height="13" viewBox="0 0 13 13"><path d="M1 1L12 12M12 1L1 12" stroke="#707070" stroke-width="1.300"/></svg>
<div class="r" style="left:15px;top:698px;width:1893px;height:24px;background:#ebebeb;"></div>
<div class="r" style="left:15px;top:722px;width:1893px;height:1px;background:#d2d2d2;"></div>
<div class="r" style="left:200px;top:698px;width:1px;height:25px;background:#d2d2d2;"></div>
<div class="r" style="left:460px;top:698px;width:1px;height:25px;background:#d2d2d2;"></div>
<div class="r" style="left:590px;top:698px;width:1px;height:25px;background:#d2d2d2;"></div>
<div class="r" style="left:690px;top:698px;width:1px;height:25px;background:#d2d2d2;"></div>
<div class="r" style="left:822px;top:698px;width:1px;height:25px;background:#d2d2d2;"></div>
<div class="r" style="left:965px;top:698px;width:1px;height:25px;background:#d2d2d2;"></div>
<div class="r" style="left:1109px;top:698px;width:1px;height:25px;background:#d2d2d2;"></div>
<div class="r" style="left:1253px;top:698px;width:1px;height:25px;background:#d2d2d2;"></div>
<div class="r" style="left:1397px;top:698px;width:1px;height:25px;background:#d2d2d2;"></div>
<div class="r" style="left:1541px;top:698px;width:1px;height:25px;background:#d2d2d2;"></div>
<div class="r" style="left:1685px;top:698px;width:1px;height:25px;background:#d2d2d2;"></div>
<svg class="r" style="left:18px;top:700px;" width="18" height="20" viewBox="0 0 18 20"><path d="M1.500 1.500h9l4 4v12.500h-13z" fill="#fcfcfc" stroke="#7c7c7c" stroke-width="1.200"/><path d="M10.500 1.500v4h4" fill="#e4e4e4" stroke="#7c7c7c" stroke-width="1"/><circle cx="13.500" cy="15.500" r="4" fill="#e8481c" stroke="#b8300c" stroke-width=".8"/><circle cx="12.600" cy="14.300" r="1.500" fill="#fff" opacity=".35"/></svg>
<div class="t" style="left:42.00px;top:698.90px;font-size:14.5px;color:#000;letter-spacing:-0.062px;">677003779</div>
<div class="t" style="left:328.10px;top:698.90px;font-size:14.5px;color:#000;letter-spacing:-0.232px;">2025.10.24 09:22:27</div>
<div class="t" style="left:564.94px;top:698.90px;font-size:14.5px;color:#000;">sell</div>
<div class="t" style="left:660.50px;top:698.90px;font-size:14.5px;color:#000;letter-spacing:-0.504px;">0.03</div>
<div class="t" style="left:771.95px;top:698.90px;font-size:14.5px;color:#000;">usdcad</div>
<div class="t" style="left:911.35px;top:698.90px;font-size:14.5px;color:#000;letter-spacing:-0.293px;">1.40182</div>
<div class="t" style="left:1055.35px;top:698.90px;font-size:14.5px;color:#000;letter-spacing:-0.293px;">1.40328</div>
<div class="t" style="left:1199.35px;top:698.90px;font-size:14.5px;color:#000;letter-spacing:-0.293px;">1.39522</div>
<div class="t" style="left:1343.35px;top:698.90px;font-size:14.5px;color:#000;letter-spacing:-0.293px;">1.40206</div>
<div class="t" style="left:1505.50px;top:698.90px;font-size:14.5px;color:#000;letter-spacing:-0.169px;">-0.18</div>
<div class="t" style="left:1655.50px;top:698.90px;font-size:14.5px;color:#000;letter-spacing:-0.504px;">0.00</div>
<div class="t" style="left:1845.60px;top:698.90px;font-size:14.5px;color:#000;letter-spacing:-0.169px;">-0.51</div>
<svg class="r" style="left:1888px;top:703px;" width="13" height="13" viewBox="0 0 13 13"><path d="M1 1L12 12M12 1L1 12" stroke="#707070" stroke-width="1.300"/></svg>
<div class="r" style="left:15px;top:723px;width:1893px;height:24px;background:#fff;"></div>
<div class="r" style="left:15px;top:747px;width:1893px;height:1px;background:#d2d2d2;"></div>
<div class="r" style="left:200px;top:723px;width:1px;height:25px;background:#d2d2d2;"></div>
<div class="r" style="left:460px;top:723px;width:1px;height:25px;background:#d2d2d2;"></div>
<div class="r" style="left:590px;top:723px;width:1px;height:25px;background:#d2d2d2;"></div>
<div class="r" style="left:690px;top:723px;width:1px;height:25px;background:#d2d2d2;"></div>
<div class="r" style="left:822px;top:723px;width:1px;height:25px;background:#d2d2d2;"></div>
<div class="r" style="left:965px;top:723px;width:1px;height:25px;background:#d2d2d2;"></div>
<div class="r" style="left:1109px;top:723px;width:1px;height:25px;background:#d2d2d2;"></div>
<div class="r" style="left:1253px;top:723px;width:1px;height:25px;background:#d2d2d2;"></div>
<div class="r" style="left:1397px;top:723px;width:1px;height:25px;background:#d2d2d2;"></div>
<div class="r" style="left:1541px;top:723px;width:1px;height:25px;background:#d2d2d2;"></div>
<div class="r" style="left:1685px;top:723px;width:1px;height:25px;background:#d2d2d2;"></div>
<svg class="r" style="left:18px;top:725px;" width="18" height="20" viewBox="0 0 18 20"><path d="M1.500 1.500h9l4 4v12.500h-13z" fill="#fcfcfc" stroke="#7c7c7c" stroke-width="1.200"/><path d="M10.500 1.500v4h4" fill="#e4e4e4" stroke="#7c7c7c" stroke-width="1"/><circle cx="13.500" cy="15.500" r="4" fill="#e8481c" stroke="#b8300c" stroke-width=".8"/><circle cx="12.600" cy="14.300" r="1.500" fill="#fff" opacity=".35"/></svg>
<div class="t" style="left:42.00px;top:723.90px;font-size:14.5px;color:#000;letter-spacing:-0.062px;">677003806</div>
<div class="t" style="left:328.10px;top:723.90px;font-size:14.5px;color:#000;letter-spacing:-0.232px;">2025.10.24 09:22:41</div>
<div class="t" style="left:564.94px;top:723.90px;font-size:14.5px;color:#000;">sell</div>
<div class="t" style="left:660.50px;top:723.90px;font-size:14.5px;color:#000;letter-spacing:-0.504px;">0.03</div>
<div class="t" style="left:771.95px;top:723.90px;font-size:14.5px;color:#000;">usdcad</div>
<div class="t" style="left:911.35px;top:723.90px;font-size:14.5px;color:#000;letter-spacing:-0.293px;">1.40185</div>
<div class="t" style="left:1055.35px;top:723.90px;font-size:14.5px;color:#000;letter-spacing:-0.293px;">1.40328</div>
<div class="t" style="left:1199.35px;top:723.90px;font-size:14.5px;color:#000;letter-spacing:-0.293px;">1.39522</div>
<div class="t" style="left:1343.35px;top:723.90px;font-size:14.5px;color:#000;letter-spacing:-0.293px;">1.40206</div>
<div class="t" style="left:1505.50px;top:723.90px;font-size:14.5px;color:#000;letter-spacing:-0.169px;">-0.18</div>
<div class="t" style="left:1655.50px;top:723.90px;font-size:14.5px;color:#000;letter-spacing:-0.504px;">0.00</div>
<div class="t" style="left:1845.60px;top:723.90px;font-size:14.5px;color:#000;letter-spacing:-0.169px;">-0.45</div>
<svg class="r" style="left:1888px;top:728px;" width="13" height="13" viewBox="0 0 13 13"><path d="M1 1L12 12M12 1L1 12" stroke="#707070" stroke-width="1.300"/></svg>
<div class="r" style="left:15px;top:748px;width:1893px;height:24px;background:#ebebeb;"></div>
<div class="r" style="left:15px;top:772px;width:1893px;height:1px;background:#d2d2d2;"></div>
<div class="r" style="left:200px;top:748px;width:1px;height:25px;background:#d2d2d2;"></div>
<div class="r" style="left:460px;top:748px;width:1px;height:25px;background:#d2d2d2;"></div>
<div class="r" style="left:590px;top:748px;width:1px;height:25px;background:#d2d2d2;"></div>
<div class="r" style="left:690px;top:748px;width:1px;height:25px;background:#d2d2d2;"></div>
<div class="r" style="left:822px;top:748px;width:1px;height:25px;background:#d2d2d2;"></div>
<div class="r" style="left:965px;top:748px;width:1px;height:25px;background:#d2d2d2;"></div>
<div class="r" style="left:1109px;top:748px;width:1px;height:25px;background:#d2d2d2;"></div>
<div class="r" style="left:1253px;top:748px;width:1px;height:25px;background:#d2d2d2;"></div>
<div class="r" style="left:1397px;top:748px;width:1px;height:25px;background:#d2d2d2;"></div>
<div class="r" style="left:1541px;top:748px;width:1px;height:25px;background:#d2d2d2;"></div>
<div class="r" style="left:1685px;top:748px;width:1px;height:25px;background:#d2d2d2;"></div>
<svg class="r" style="left:18px;top:750px;" width="18" height="20" viewBox="0 0 18 20"><path d="M1.500 1.500h9l4 4v12.500h-13z" fill="#fcfcfc" stroke="#7c7c7c" stroke-width="1.200"/><path d="M10.500 1.500v4h4" fill="#e4e4e4" stroke="#7c7c7c" stroke-width="1"/><circle cx="13.500" cy="15.500" r="4" fill="#2f8fe6" stroke="#1a6ac0" stroke-width=".8"/><circle cx="12.600" cy="14.300" r="1.500" fill="#fff" opacity=".35"/></svg>
<div class="t" style="left:42.00px;top:748.90px;font-size:14.5px;color:#000;letter-spacing:-0.062px;">676884807</div>
<div class="t" style="left:328.10px;top:748.90px;font-size:14.5px;color:#000;letter-spacing:-0.176px;">2025.10.23 11:23:30</div>
<div class="t" style="left:563.33px;top:748.90px;font-size:14.5px;color:#000;">buy</div>
<div class="t" style="left:660.50px;top:748.90px;font-size:14.5px;color:#000;letter-spacing:-0.504px;">0.02</div>
<div class="t" style="left:776.79px;top:748.90px;font-size:14.5px;color:#000;">usdjpy</div>
<div class="t" style="left:911.35px;top:748.90px;font-size:14.5px;color:#000;letter-spacing:-0.293px;">152.508</div>
<div class="t" style="left:1071.45px;top:748.90px;font-size:14.5px;color:#000;letter-spacing:-0.405px;">0.000</div>
<div class="t" style="left:1199.35px;top:748.90px;font-size:14.5px;color:#000;letter-spacing:-0.293px;">153.208</div>
<div class="t" style="left:1343.35px;top:748.90px;font-size:14.5px;color:#000;letter-spacing:-0.293px;">152.964</div>
<div class="t" style="left:1505.50px;top:748.90px;font-size:14.5px;color:#000;letter-spacing:-0.169px;">-0.12</div>
<div class="t" style="left:1655.50px;top:748.90px;font-size:14.5px;color:#000;letter-spacing:-0.504px;">0.16</div>
<div class="t" style="left:1851.60px;top:748.90px;font-size:14.5px;color:#000;letter-spacing:-0.504px;">5.96</div>
<svg class="r" style="left:1888px;top:753px;" width="13" height="13" viewBox="0 0 13 13"><path d="M1 1L12 12M12 1L1 12" stroke="#707070" stroke-width="1.300"/></svg>
<div class="r" style="left:15px;top:773px;width:1893px;height:25px;background:#c8c8c8;"></div>
<svg class="r" style="left:18px;top:776px;" width="17" height="18" viewBox="0 0 17 18"><rect x="1" y="1" width="14.500" height="16" rx="1.500" fill="#f4f4f4" stroke="#777" stroke-width="1"/><path d="M8.300 14l4.200-4.500h-2.500v-4h-3.400v4h-2.500z" fill="#e8481c" stroke="#a32a0a" stroke-width=".7"/></svg>
<div class="t" style="left:42.50px;top:773.90px;font-size:14.2px;color:#000;font-weight:bold;letter-spacing:0.255px;">Balance: 3 000.88 USD</div>
<div class="t" style="left:208.40px;top:773.90px;font-size:14.2px;color:#000;font-weight:bold;letter-spacing:0.384px;">Equity: 3 000.42</div>
<div class="t" style="left:330.40px;top:773.90px;font-size:14.2px;color:#000;font-weight:bold;letter-spacing:0.518px;">Margin: 62.94</div>
<div class="t" style="left:436.50px;top:773.90px;font-size:14.2px;color:#000;font-weight:bold;letter-spacing:0.398px;">Free margin: 2 937.48</div>
<div class="t" style="left:598.70px;top:773.90px;font-size:14.2px;color:#000;font-weight:bold;letter-spacing:0.472px;">Margin level: 4767.44%</div>
<div class="t" style="left:1842.00px;top:773.90px;font-size:14.2px;color:#000;font-weight:bold;letter-spacing:0.626px;">-0.46</div>
<div class="r" style="left:15px;top:798px;width:1893px;height:24px;background:#ebebeb;"></div>
<div class="r" style="left:15px;top:822px;width:1893px;height:1px;background:#d2d2d2;"></div>
<div class="r" style="left:200px;top:798px;width:1px;height:25px;background:#d2d2d2;"></div>
<div class="r" style="left:460px;top:798px;width:1px;height:25px;background:#d2d2d2;"></div>
<div class="r" style="left:590px;top:798px;width:1px;height:25px;background:#d2d2d2;"></div>
<div class="r" style="left:690px;top:798px;width:1px;height:25px;background:#d2d2d2;"></div>
<div class="r" style="left:822px;top:798px;width:1px;height:25px;background:#d2d2d2;"></div>
<div class="r" style="left:965px;top:798px;width:1px;height:25px;background:#d2d2d2;"></div>
<div class="r" style="left:1109px;top:798px;width:1px;height:25px;background:#d2d2d2;"></div>
<div class="r" style="left:1253px;top:798px;width:1px;height:25px;background:#d2d2d2;"></div>
<div class="r" style="left:1397px;top:798px;width:1px;height:25px;background:#d2d2d2;"></div>
<div class="r" style="left:1685px;top:798px;width:1px;height:25px;background:#d2d2d2;"></div>
<svg class="r" style="left:18px;top:800px;" width="18" height="20" viewBox="0 0 18 20"><path d="M1.500 1.500h9l4 4v12.500h-13z" fill="#fcfcfc" stroke="#7c7c7c" stroke-width="1.200"/><path d="M10.500 1.500v4h4" fill="#e4e4e4" stroke="#7c7c7c" stroke-width="1"/><circle cx="13.500" cy="15.500" r="4" fill="#2f8fe6" stroke="#1a6ac0" stroke-width=".8"/><circle cx="12.600" cy="14.300" r="1.500" fill="#fff" opacity=".35"/></svg>
<div class="t" style="left:42.00px;top:798.90px;font-size:14.5px;color:#000;letter-spacing:-0.062px;">677003995</div>
<div class="t" style="left:328.10px;top:798.90px;font-size:14.5px;color:#000;letter-spacing:-0.232px;">2025.10.24 09:24:59</div>
<div class="t" style="left:531.90px;top:798.90px;font-size:14.5px;color:#000;">buy stop</div>
<div class="t" style="left:660.50px;top:798.90px;font-size:14.5px;color:#000;letter-spacing:-0.504px;">0.02</div>
<div class="t" style="left:771.14px;top:798.90px;font-size:14.5px;color:#000;">gbpusd</div>
<div class="t" style="left:911.35px;top:798.90px;font-size:14.5px;color:#000;letter-spacing:-0.293px;">1.33520</div>
<div class="t" style="left:1055.35px;top:798.90px;font-size:14.5px;color:#000;letter-spacing:-0.293px;">0.00000</div>
<div class="t" style="left:1199.35px;top:798.90px;font-size:14.5px;color:#000;letter-spacing:-0.293px;">0.00000</div>
<div class="t" style="left:1343.35px;top:798.90px;font-size:14.5px;color:#000;letter-spacing:-0.293px;">1.33201</div>
<svg class="r" style="left:1888px;top:803px;" width="13" height="13" viewBox="0 0 13 13"><path d="M1 1L12 12M12 1L1 12" stroke="#707070" stroke-width="1.300"/></svg>
<div class="r" style="left:15px;top:823px;width:1893px;height:24px;background:#fff;"></div>
<div class="r" style="left:15px;top:847px;width:1893px;height:1px;background:#d2d2d2;"></div>
<div class="r" style="left:200px;top:823px;width:1px;height:25px;background:#d2d2d2;"></div>
<div class="r" style="left:460px;top:823px;width:1px;height:25px;background:#d2d2d2;"></div>
<div class="r" style="left:590px;top:823px;width:1px;height:25px;background:#d2d2d2;"></div>
<div class="r" style="left:690px;top:823px;width:1px;height:25px;background:#d2d2d2;"></div>
<div class="r" style="left:822px;top:823px;width:1px;height:25px;background:#d2d2d2;"></div>
<div class="r" style="left:965px;top:823px;width:1px;height:25px;background:#d2d2d2;"></div>
<div class="r" style="left:1109px;top:823px;width:1px;height:25px;background:#d2d2d2;"></div>
<div class="r" style="left:1253px;top:823px;width:1px;height:25px;background:#d2d2d2;"></div>
<div class="r" style="left:1397px;top:823px;width:1px;height:25px;background:#d2d2d2;"></div>
<div class="r" style="left:1685px;top:823px;width:1px;height:25px;background:#d2d2d2;"></div>
<svg class="r" style="left:18px;top:825px;" width="18" height="20" viewBox="0 0 18 20"><path d="M1.500 1.500h9l4 4v12.500h-13z" fill="#fcfcfc" stroke="#7c7c7c" stroke-width="1.200"/><path d="M10.500 1.500v4h4" fill="#e4e4e4" stroke="#7c7c7c" stroke-width="1"/><circle cx="13.500" cy="15.500" r="4" fill="#2f8fe6" stroke="#1a6ac0" stroke-width=".8"/><circle cx="12.600" cy="14.300" r="1.500" fill="#fff" opacity=".35"/></svg>
<div class="t" style="left:42.00px;top:823.90px;font-size:14.5px;color:#000;letter-spacing:-0.062px;">677003910</div>
<div class="t" style="left:328.10px;top:823.90px;font-size:14.5px;color:#000;letter-spacing:-0.232px;">2025.10.24 09:24:04</div>
<div class="t" style="left:531.90px;top:823.90px;font-size:14.5px;color:#000;">buy stop</div>
<div class="t" style="left:660.50px;top:823.90px;font-size:14.5px;color:#000;letter-spacing:-0.504px;">0.10</div>
<div class="t" style="left:771.95px;top:823.90px;font-size:14.5px;color:#000;">usdcad</div>
<div class="t" style="left:911.35px;top:823.90px;font-size:14.5px;color:#000;letter-spacing:-0.293px;">1.40328</div>
<div class="t" style="left:1055.35px;top:823.90px;font-size:14.5px;color:#000;letter-spacing:-0.293px;">0.00000</div>
<div class="t" style="left:1199.35px;top:823.90px;font-size:14.5px;color:#000;letter-spacing:-0.293px;">0.00000</div>
<div class="t" style="left:1343.35px;top:823.90px;font-size:14.5px;color:#000;letter-spacing:-0.293px;">1.40206</div>
<svg class="r" style="left:1888px;top:828px;" width="13" height="13" viewBox="0 0 13 13"><path d="M1 1L12 12M12 1L1 12" stroke="#707070" stroke-width="1.300"/></svg>
<div class="r" style="left:15px;top:848px;width:1893px;height:24px;background:#ebebeb;"></div>
<div class="r" style="left:15px;top:872px;width:1893px;height:1px;background:#d2d2d2;"></div>
<div class="r" style="left:200px;top:848px;width:1px;height:25px;background:#d2d2d2;"></div>
<div class="r" style="left:460px;top:848px;width:1px;height:25px;background:#d2d2d2;"></div>
<div class="r" style="left:590px;top:848px;width:1px;height:25px;background:#d2d2d2;"></div>
<div class="r" style="left:690px;top:848px;width:1px;height:25px;background:#d2d2d2;"></div>
<div class="r" style="left:822px;top:848px;width:1px;height:25px;background:#d2d2d2;"></div>
<div class="r" style="left:965px;top:848px;width:1px;height:25px;background:#d2d2d2;"></div>
<div class="r" style="left:1109px;top:848px;width:1px;height:25px;background:#d2d2d2;"></div>
<div class="r" style="left:1253px;top:848px;width:1px;height:25px;background:#d2d2d2;"></div>
<div class="r" style="left:1397px;top:848px;width:1px;height:25px;background:#d2d2d2;"></div>
<div class="r" style="left:1685px;top:848px;width:1px;height:25px;background:#d2d2d2;"></div>
<svg class="r" style="left:18px;top:850px;" width="18" height="20" viewBox="0 0 18 20"><path d="M1.500 1.500h9l4 4v12.500h-13z" fill="#fcfcfc" stroke="#7c7c7c" stroke-width="1.200"/><path d="M10.500 1.500v4h4" fill="#e4e4e4" stroke="#7c7c7c" stroke-width="1"/><circle cx="13.500" cy="15.500" r="4" fill="#2f8fe6" stroke="#1a6ac0" stroke-width=".8"/><circle cx="12.600" cy="14.300" r="1.500" fill="#fff" opacity=".35"/></svg>
<div class="t" style="left:42.00px;top:848.90px;font-size:14.5px;color:#000;letter-spacing:-0.062px;">677003923</div>
<div class="t" style="left:328.10px;top:848.90px;font-size:14.5px;color:#000;letter-spacing:-0.232px;">2025.10.24 09:24:16</div>
<div class="t" style="left:531.90px;top:848.90px;font-size:14.5px;color:#000;">buy stop</div>
<div class="t" style="left:660.50px;top:848.90px;font-size:14.5px;color:#000;letter-spacing:-0.235px;">0.11</div>
<div class="t" style="left:771.95px;top:848.90px;font-size:14.5px;color:#000;">usdcad</div>
<div class="t" style="left:911.35px;top:848.90px;font-size:14.5px;color:#000;letter-spacing:-0.293px;">1.40328</div>
<div class="t" style="left:1055.35px;top:848.90px;font-size:14.5px;color:#000;letter-spacing:-0.293px;">0.00000</div>
<div class="t" style="left:1199.35px;top:848.90px;font-size:14.5px;color:#000;letter-spacing:-0.293px;">0.00000</div>
<div class="t" style="left:1343.35px;top:848.90px;font-size:14.5px;color:#000;letter-spacing:-0.293px;">1.40206</div>
<svg class="r" style="left:1888px;top:853px;" width="13" height="13" viewBox="0 0 13 13"><path d="M1 1L12 12M12 1L1 12" stroke="#707070" stroke-width="1.300"/></svg>
</body></html>
